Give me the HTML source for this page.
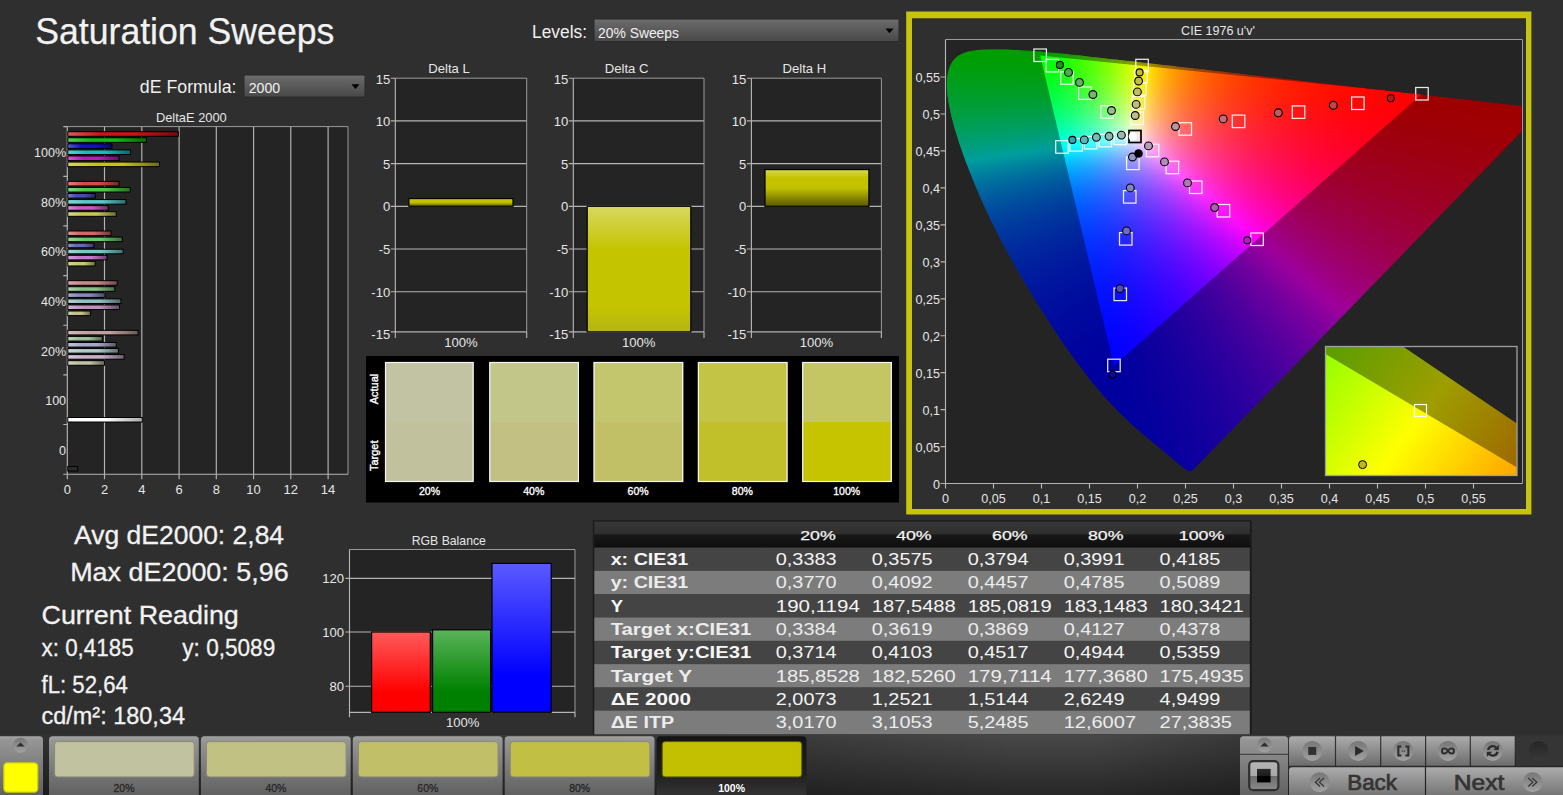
<!DOCTYPE html>
<html><head><meta charset="utf-8"><title>Saturation Sweeps</title>
<style>
html,body{margin:0;padding:0;background:#2f2f2f;}
body{width:1563px;height:795px;overflow:hidden;position:relative;font-family:"Liberation Sans", sans-serif;}
svg{position:absolute;left:0;top:0;}
svg text{font-family:"Liberation Sans", sans-serif;}
#cie{position:absolute;left:945.5px;top:48px;width:577.0px;height:435.5px;clip-path:path('M246.6,422.8 L246.5,422.8 L246.4,422.8 L246.4,422.8 L246.3,422.9 L246.1,422.9 L246.0,422.9 L245.8,422.9 L245.7,423.0 L245.6,423.1 L245.5,423.2 L245.4,423.3 L245.2,423.3 L244.9,423.3 L244.6,423.2 L244.3,423.2 L244.0,423.2 L243.7,423.2 L243.3,423.1 L242.8,422.9 L242.1,422.5 L241.2,422.0 L240.2,421.3 L239.1,420.5 L237.7,419.5 L236.2,418.3 L234.5,416.9 L232.5,415.3 L230.4,413.5 L228.0,411.5 L225.4,409.2 L222.5,406.8 L219.3,404.2 L215.7,401.2 L211.8,398.0 L207.5,394.4 L202.8,390.5 L197.8,386.4 L192.4,381.7 L186.5,376.5 L180.2,370.6 L173.5,364.1 L166.2,356.6 L158.0,347.5 L148.6,336.4 L138.3,323.4 L127.4,308.9 L116.0,292.7 L104.1,274.7 L91.8,255.3 L79.5,234.9 L67.3,213.8 L55.6,192.4 L44.8,171.1 L35.3,150.5 L27.0,130.8 L19.8,112.3 L13.9,95.5 L9.2,80.5 L5.7,67.4 L3.3,55.8 L1.9,45.9 L1.3,37.4 L1.6,30.1 L2.7,23.7 L4.4,18.3 L6.9,13.8 L10.0,10.1 L13.7,7.3 L17.7,5.2 L22.2,3.7 L26.9,2.7 L32.0,2.1 L37.2,1.7 L42.6,1.5 L48.1,1.4 L53.5,1.4 L59.0,1.5 L64.5,1.7 L70.2,1.9 L76.1,2.2 L82.1,2.6 L88.3,3.1 L94.7,3.6 L101.3,4.2 L108.2,4.8 L115.3,5.6 L122.8,6.3 L130.5,7.1 L138.6,8.0 L147.0,8.9 L155.7,9.9 L164.8,10.9 L174.3,12.0 L184.2,13.1 L194.5,14.2 L205.1,15.5 L216.2,16.7 L227.7,18.1 L239.6,19.4 L251.8,20.8 L264.5,22.3 L277.5,23.8 L290.8,25.3 L304.4,26.9 L318.2,28.5 L332.3,30.1 L346.4,31.7 L360.3,33.3 L373.9,34.9 L387.4,36.4 L400.8,38.0 L414.0,39.5 L426.7,41.0 L438.8,42.3 L450.4,43.7 L461.4,44.9 L471.8,46.1 L481.7,47.3 L490.8,48.3 L499.4,49.3 L507.4,50.2 L514.8,51.1 L521.7,51.9 L528.2,52.6 L534.2,53.3 L540.0,54.0 L545.4,54.6 L550.5,55.2 L555.3,55.7 L559.7,56.2 L563.8,56.7 L567.5,57.1 L570.9,57.5 L573.8,57.9 L576.5,58.2 L578.9,58.4 L581.1,58.7 L583.1,58.9 L584.8,59.1 L586.4,59.3 L587.6,59.5 L588.7,59.6 L589.7,59.7 L590.6,59.8 L591.5,59.9 L592.3,60.0 L593.0,60.1 L593.7,60.2 L594.4,60.2 L595.1,60.3 L595.8,60.4 L596.5,60.5 L597.0,60.5 L597.4,60.6 L597.7,60.6 L597.9,60.6 L598.1,60.7 L598.3,60.7 L598.4,60.7 L598.4,60.7 L598.4,60.7Z');overflow:hidden;}
#cie b{display:block;filter:blur(.8px);}
#ciew{position:absolute;left:0;top:0;width:1563px;height:795px;filter:blur(.6px);}
#cie i{display:block;height:2px;}
</style></head><body>
<svg width="1563" height="795" viewBox="0 0 1563 795" shape-rendering="auto"><defs><linearGradient id="dd" x1="0" y1="0" x2="0" y2="1"><stop offset="0" stop-color="#6c6c6c"/><stop offset="1" stop-color="#484848"/></linearGradient><linearGradient id="hb0" x1="0" y1="0" x2="1" y2="0"><stop offset="0" stop-color="#db5a5a"/><stop offset=".3" stop-color="#cc1414"/><stop offset=".6" stop-color="#cc1414"/><stop offset="1" stop-color="#700b0b"/></linearGradient><linearGradient id="hb1" x1="0" y1="0" x2="1" y2="0"><stop offset="0" stop-color="#5ace5a"/><stop offset=".3" stop-color="#14ba14"/><stop offset=".6" stop-color="#14ba14"/><stop offset="1" stop-color="#0b660b"/></linearGradient><linearGradient id="hb2" x1="0" y1="0" x2="1" y2="0"><stop offset="0" stop-color="#5959d2"/><stop offset=".3" stop-color="#1212c0"/><stop offset=".6" stop-color="#1212c0"/><stop offset="1" stop-color="#090969"/></linearGradient><linearGradient id="hb3" x1="0" y1="0" x2="1" y2="0"><stop offset="0" stop-color="#5ad0d0"/><stop offset=".3" stop-color="#14bcbc"/><stop offset=".6" stop-color="#14bcbc"/><stop offset="1" stop-color="#0b6767"/></linearGradient><linearGradient id="hb4" x1="0" y1="0" x2="1" y2="0"><stop offset="0" stop-color="#d05dd0"/><stop offset=".3" stop-color="#bc18bc"/><stop offset=".6" stop-color="#bc18bc"/><stop offset="1" stop-color="#670d67"/></linearGradient><linearGradient id="hb5" x1="0" y1="0" x2="1" y2="0"><stop offset="0" stop-color="#d7d560"/><stop offset=".3" stop-color="#c6c41c"/><stop offset=".6" stop-color="#c6c41c"/><stop offset="1" stop-color="#6c6b0f"/></linearGradient><linearGradient id="hb6" x1="0" y1="0" x2="1" y2="0"><stop offset="0" stop-color="#e37e7e"/><stop offset=".3" stop-color="#d84848"/><stop offset=".6" stop-color="#d84848"/><stop offset="1" stop-color="#762727"/></linearGradient><linearGradient id="hb7" x1="0" y1="0" x2="1" y2="0"><stop offset="0" stop-color="#7ed87e"/><stop offset=".3" stop-color="#48c848"/><stop offset=".6" stop-color="#48c848"/><stop offset="1" stop-color="#276e27"/></linearGradient><linearGradient id="hb8" x1="0" y1="0" x2="1" y2="0"><stop offset="0" stop-color="#7e7ecd"/><stop offset=".3" stop-color="#4848b8"/><stop offset=".6" stop-color="#4848b8"/><stop offset="1" stop-color="#272765"/></linearGradient><linearGradient id="hb9" x1="0" y1="0" x2="1" y2="0"><stop offset="0" stop-color="#8ad8d8"/><stop offset=".3" stop-color="#58c8c8"/><stop offset=".6" stop-color="#58c8c8"/><stop offset="1" stop-color="#306e6e"/></linearGradient><linearGradient id="hb10" x1="0" y1="0" x2="1" y2="0"><stop offset="0" stop-color="#d88ad8"/><stop offset=".3" stop-color="#c858c8"/><stop offset=".6" stop-color="#c858c8"/><stop offset="1" stop-color="#6e306e"/></linearGradient><linearGradient id="hb11" x1="0" y1="0" x2="1" y2="0"><stop offset="0" stop-color="#d8d88a"/><stop offset=".3" stop-color="#c8c858"/><stop offset=".6" stop-color="#c8c858"/><stop offset="1" stop-color="#6e6e30"/></linearGradient><linearGradient id="hb12" x1="0" y1="0" x2="1" y2="0"><stop offset="0" stop-color="#de9595"/><stop offset=".3" stop-color="#d06868"/><stop offset=".6" stop-color="#d06868"/><stop offset="1" stop-color="#723939"/></linearGradient><linearGradient id="hb13" x1="0" y1="0" x2="1" y2="0"><stop offset="0" stop-color="#95d895"/><stop offset=".3" stop-color="#68c868"/><stop offset=".6" stop-color="#68c868"/><stop offset="1" stop-color="#396e39"/></linearGradient><linearGradient id="hb14" x1="0" y1="0" x2="1" y2="0"><stop offset="0" stop-color="#9595cd"/><stop offset=".3" stop-color="#6868b8"/><stop offset=".6" stop-color="#6868b8"/><stop offset="1" stop-color="#393965"/></linearGradient><linearGradient id="hb15" x1="0" y1="0" x2="1" y2="0"><stop offset="0" stop-color="#a0d8d8"/><stop offset=".3" stop-color="#78c8c8"/><stop offset=".6" stop-color="#78c8c8"/><stop offset="1" stop-color="#426e6e"/></linearGradient><linearGradient id="hb16" x1="0" y1="0" x2="1" y2="0"><stop offset="0" stop-color="#d8a0d8"/><stop offset=".3" stop-color="#c878c8"/><stop offset=".6" stop-color="#c878c8"/><stop offset="1" stop-color="#6e426e"/></linearGradient><linearGradient id="hb17" x1="0" y1="0" x2="1" y2="0"><stop offset="0" stop-color="#d8d89a"/><stop offset=".3" stop-color="#c8c870"/><stop offset=".6" stop-color="#c8c870"/><stop offset="1" stop-color="#6e6e3d"/></linearGradient><linearGradient id="hb18" x1="0" y1="0" x2="1" y2="0"><stop offset="0" stop-color="#d8abab"/><stop offset=".3" stop-color="#c88888"/><stop offset=".6" stop-color="#c88888"/><stop offset="1" stop-color="#6e4a4a"/></linearGradient><linearGradient id="hb19" x1="0" y1="0" x2="1" y2="0"><stop offset="0" stop-color="#abd2ab"/><stop offset=".3" stop-color="#88c088"/><stop offset=".6" stop-color="#88c088"/><stop offset="1" stop-color="#4a694a"/></linearGradient><linearGradient id="hb20" x1="0" y1="0" x2="1" y2="0"><stop offset="0" stop-color="#ababd2"/><stop offset=".3" stop-color="#8888c0"/><stop offset=".6" stop-color="#8888c0"/><stop offset="1" stop-color="#4a4a69"/></linearGradient><linearGradient id="hb21" x1="0" y1="0" x2="1" y2="0"><stop offset="0" stop-color="#b1d2d2"/><stop offset=".3" stop-color="#90c0c0"/><stop offset=".6" stop-color="#90c0c0"/><stop offset="1" stop-color="#4f6969"/></linearGradient><linearGradient id="hb22" x1="0" y1="0" x2="1" y2="0"><stop offset="0" stop-color="#d2b1d2"/><stop offset=".3" stop-color="#c090c0"/><stop offset=".6" stop-color="#c090c0"/><stop offset="1" stop-color="#694f69"/></linearGradient><linearGradient id="hb23" x1="0" y1="0" x2="1" y2="0"><stop offset="0" stop-color="#d2d2ab"/><stop offset=".3" stop-color="#c0c088"/><stop offset=".6" stop-color="#c0c088"/><stop offset="1" stop-color="#69694a"/></linearGradient><linearGradient id="hb24" x1="0" y1="0" x2="1" y2="0"><stop offset="0" stop-color="#d2bcbc"/><stop offset=".3" stop-color="#c0a0a0"/><stop offset=".6" stop-color="#c0a0a0"/><stop offset="1" stop-color="#695858"/></linearGradient><linearGradient id="hb25" x1="0" y1="0" x2="1" y2="0"><stop offset="0" stop-color="#bcd2bc"/><stop offset=".3" stop-color="#a0c0a0"/><stop offset=".6" stop-color="#a0c0a0"/><stop offset="1" stop-color="#586958"/></linearGradient><linearGradient id="hb26" x1="0" y1="0" x2="1" y2="0"><stop offset="0" stop-color="#c2c2d8"/><stop offset=".3" stop-color="#a8a8c8"/><stop offset=".6" stop-color="#a8a8c8"/><stop offset="1" stop-color="#5c5c6e"/></linearGradient><linearGradient id="hb27" x1="0" y1="0" x2="1" y2="0"><stop offset="0" stop-color="#c7d8d8"/><stop offset=".3" stop-color="#b0c8c8"/><stop offset=".6" stop-color="#b0c8c8"/><stop offset="1" stop-color="#606e6e"/></linearGradient><linearGradient id="hb28" x1="0" y1="0" x2="1" y2="0"><stop offset="0" stop-color="#d8c7d8"/><stop offset=".3" stop-color="#c8b0c8"/><stop offset=".6" stop-color="#c8b0c8"/><stop offset="1" stop-color="#6e606e"/></linearGradient><linearGradient id="hb29" x1="0" y1="0" x2="1" y2="0"><stop offset="0" stop-color="#d2d2c2"/><stop offset=".3" stop-color="#c0c0a8"/><stop offset=".6" stop-color="#c0c0a8"/><stop offset="1" stop-color="#69695c"/></linearGradient><linearGradient id="wb" x1="0" y1="0" x2="1" y2="0"><stop offset="0" stop-color="#fff"/><stop offset=".5" stop-color="#fff"/><stop offset="1" stop-color="#aaa"/></linearGradient><linearGradient id="yb1" x1="0" y1="0" x2="0" y2="1"><stop offset="0" stop-color="#d8d860"/><stop offset=".35" stop-color="#c4c400"/><stop offset=".8" stop-color="#c4c400"/><stop offset="1" stop-color="#b4b418"/></linearGradient><linearGradient id="yb2" x1="0" y1="0" x2="0" y2="1"><stop offset="0" stop-color="#d8d848"/><stop offset=".22" stop-color="#c6c400"/><stop offset=".5" stop-color="#c4c200"/><stop offset="1" stop-color="#585800"/></linearGradient><linearGradient id="gr" x1="0" y1="0" x2="0" y2="1"><stop offset="0" stop-color="#ff5a5a"/><stop offset=".75" stop-color="#ff0000"/></linearGradient><linearGradient id="gg" x1="0" y1="0" x2="0" y2="1"><stop offset="0" stop-color="#5ab45a"/><stop offset=".75" stop-color="#008000"/></linearGradient><linearGradient id="gb" x1="0" y1="0" x2="0" y2="1"><stop offset="0" stop-color="#5a5aff"/><stop offset=".75" stop-color="#0000ff"/></linearGradient><linearGradient id="th" x1="0" y1="0" x2="0" y2="1"><stop offset="0" stop-color="#383838"/><stop offset=".48" stop-color="#2e2e2e"/><stop offset=".5" stop-color="#181818"/><stop offset="1" stop-color="#0e0e0e"/></linearGradient><linearGradient id="bar" x1="0" y1="0" x2="0" y2="1"><stop offset="0" stop-color="#484848"/><stop offset="1" stop-color="#272727"/></linearGradient><linearGradient id="tab" x1="0" y1="0" x2="0" y2="1"><stop offset="0" stop-color="#a4a4a4"/><stop offset="0.06" stop-color="#969696"/><stop offset="1" stop-color="#606060"/></linearGradient><linearGradient id="tabs" x1="0" y1="0" x2="0" y2="1"><stop offset="0" stop-color="#141414"/><stop offset="0.6" stop-color="#1e1e1e"/><stop offset="1" stop-color="#343434"/></linearGradient><linearGradient id="btn" x1="0" y1="0" x2="0" y2="1"><stop offset="0" stop-color="#acacac"/><stop offset="1" stop-color="#6c6c6c"/></linearGradient><linearGradient id="btn2" x1="0" y1="0" x2="0" y2="1"><stop offset="0" stop-color="#acacac"/><stop offset="1" stop-color="#747474"/></linearGradient><linearGradient id="ic" x1="0" y1="0" x2="0" y2="1"><stop offset="0" stop-color="#767676"/><stop offset="1" stop-color="#a2a2a2"/></linearGradient><linearGradient id="gloss" x1="0" y1="0" x2="0" y2="1"><stop offset="0" stop-color="#b6b6b6"/><stop offset="0.5" stop-color="#a8a8a8"/><stop offset="0.5" stop-color="#6c6c6c"/><stop offset="1" stop-color="#8a8a8a"/></linearGradient><linearGradient id="barh" x1="0" y1="0" x2="1" y2="0"><stop offset="0" stop-color="#000" stop-opacity=".3"/><stop offset=".5" stop-color="#000" stop-opacity=".18"/><stop offset=".65" stop-color="#000" stop-opacity="0"/><stop offset=".7" stop-color="#000" stop-opacity="0"/><stop offset=".8" stop-color="#000" stop-opacity=".22"/><stop offset="1" stop-color="#000" stop-opacity=".3"/></linearGradient><linearGradient id="blk" x1="0" y1="0" x2="0" y2="1"><stop offset="0" stop-color="#2a2a2a"/><stop offset="0.5" stop-color="#1c1c1c"/><stop offset="0.5" stop-color="#000"/><stop offset="1" stop-color="#000"/></linearGradient><linearGradient id="dis" x1="0" y1="0" x2="0" y2="1"><stop offset="0" stop-color="#262626"/><stop offset="1" stop-color="#383838"/></linearGradient></defs>
<text x="35.2" y="43.7" font-size="36.67" fill="#f2f2f2" textLength="299.2" lengthAdjust="spacingAndGlyphs" stroke="#f2f2f2" stroke-width=".25">Saturation Sweeps</text>
<text x="139.8" y="93" font-size="18.70" fill="#f0f0f0" textLength="96.7" lengthAdjust="spacingAndGlyphs">dE Formula:</text>
<rect x="244" y="75" width="121" height="22" fill="url(#dd)" stroke="#2a2a2a" stroke-width="1" rx="1.5"/><text x="248.7" y="93" font-size="14.90" fill="#f0f0f0" textLength="31.4" lengthAdjust="spacingAndGlyphs">2000</text><path d="M351.5,84.2h8l-4,4.8z" fill="#000"/>
<text x="532" y="38" font-size="18.70" fill="#f0f0f0" textLength="55" lengthAdjust="spacingAndGlyphs">Levels:</text>
<rect x="594" y="19" width="305" height="22.5" fill="url(#dd)" stroke="#2a2a2a" stroke-width="1" rx="1.5"/><text x="598" y="38" font-size="14.90" fill="#f0f0f0" textLength="81" lengthAdjust="spacingAndGlyphs">20% Sweeps</text><path d="M885.5,28.45h8l-4,4.8z" fill="#000"/>
<text x="155.9" y="122" font-size="12.75" fill="#e6e6e6" textLength="70.9" lengthAdjust="spacingAndGlyphs">DeltaE 2000</text>
<rect x="67.3" y="126.6" width="280.7" height="347.6" fill="#242424"/>
<path d="M104.5,126.6V474.2M141.8,126.6V474.2M179.1,126.6V474.2M216.3,126.6V474.2M253.6,126.6V474.2M290.8,126.6V474.2M328.1,126.6V474.2" stroke="#b4b4b4" stroke-width="1.15" fill="none"/>
<path d="M67.3,126.6H348V474.2" stroke="#9a9a9a" stroke-width="1" fill="none"/>
<path d="M67.3,126.6V474.2H348" stroke="#b4b4b4" stroke-width="1.15" fill="none"/>
<path d="M63.3,126.6h4M63.3,176.3h4M63.3,225.9h4M63.3,275.6h4M63.3,325.2h4M63.3,374.9h4M63.3,424.5h4M63.3,474.2h4M67.3,474.2v5M104.5,474.2v5M141.8,474.2v5M179.1,474.2v5M216.3,474.2v5M253.6,474.2v5M290.8,474.2v5M328.1,474.2v5" stroke="#b4b4b4" stroke-width="1.15" fill="none"/>
<text x="33.9691" y="156.929" font-size="13.44" fill="#e6e6e6" textLength="32.1309" lengthAdjust="spacingAndGlyphs">100%</text>
<text x="40.9555" y="206.586" font-size="13.44" fill="#e6e6e6" textLength="25.1445" lengthAdjust="spacingAndGlyphs">80%</text>
<text x="40.9555" y="256.243" font-size="13.44" fill="#e6e6e6" textLength="25.1445" lengthAdjust="spacingAndGlyphs">60%</text>
<text x="40.9555" y="305.9" font-size="13.44" fill="#e6e6e6" textLength="25.1445" lengthAdjust="spacingAndGlyphs">40%</text>
<text x="40.9555" y="355.557" font-size="13.44" fill="#e6e6e6" textLength="25.1445" lengthAdjust="spacingAndGlyphs">20%</text>
<text x="45.1407" y="405.214" font-size="13.44" fill="#e6e6e6" textLength="20.9593" lengthAdjust="spacingAndGlyphs">100</text>
<text x="59.1136" y="454.871" font-size="13.44" fill="#e6e6e6" textLength="6.98643" lengthAdjust="spacingAndGlyphs">0</text>
<text x="63.6987" y="494" font-size="13.44" fill="#e6e6e6" textLength="7.2025" lengthAdjust="spacingAndGlyphs">0</text>
<text x="100.949" y="494" font-size="13.44" fill="#e6e6e6" textLength="7.2025" lengthAdjust="spacingAndGlyphs">2</text>
<text x="138.199" y="494" font-size="13.44" fill="#e6e6e6" textLength="7.2025" lengthAdjust="spacingAndGlyphs">4</text>
<text x="175.449" y="494" font-size="13.44" fill="#e6e6e6" textLength="7.2025" lengthAdjust="spacingAndGlyphs">6</text>
<text x="212.699" y="494" font-size="13.44" fill="#e6e6e6" textLength="7.2025" lengthAdjust="spacingAndGlyphs">8</text>
<text x="246.347" y="494" font-size="13.44" fill="#e6e6e6" textLength="14.405" lengthAdjust="spacingAndGlyphs">10</text>
<text x="283.597" y="494" font-size="13.44" fill="#e6e6e6" textLength="14.405" lengthAdjust="spacingAndGlyphs">12</text>
<text x="320.847" y="494" font-size="13.44" fill="#e6e6e6" textLength="14.405" lengthAdjust="spacingAndGlyphs">14</text>
<rect x="67.8" y="131.7" width="110.505" height="4.6" fill="url(#hb0)" stroke="#000" stroke-width="1"/>
<rect x="67.8" y="137.77" width="78.6562" height="4.6" fill="url(#hb1)" stroke="#000" stroke-width="1"/>
<rect x="67.8" y="143.84" width="44.2" height="4.6" fill="url(#hb2)" stroke="#000" stroke-width="1"/>
<rect x="67.8" y="149.91" width="62.825" height="4.6" fill="url(#hb3)" stroke="#000" stroke-width="1"/>
<rect x="67.8" y="155.98" width="51.2775" height="4.6" fill="url(#hb4)" stroke="#000" stroke-width="1"/>
<rect x="67.8" y="162.05" width="91.6938" height="4.6" fill="url(#hb5)" stroke="#000" stroke-width="1"/>
<rect x="67.8" y="181.357" width="51.2775" height="4.6" fill="url(#hb6)" stroke="#000" stroke-width="1"/>
<rect x="67.8" y="187.427" width="62.4525" height="4.6" fill="url(#hb7)" stroke="#000" stroke-width="1"/>
<rect x="67.8" y="193.497" width="27.4375" height="4.6" fill="url(#hb8)" stroke="#000" stroke-width="1"/>
<rect x="67.8" y="199.567" width="58.1687" height="4.6" fill="url(#hb9)" stroke="#000" stroke-width="1"/>
<rect x="67.8" y="205.637" width="40.475" height="4.6" fill="url(#hb10)" stroke="#000" stroke-width="1"/>
<rect x="67.8" y="211.707" width="48.4838" height="4.6" fill="url(#hb11)" stroke="#000" stroke-width="1"/>
<rect x="67.8" y="231.014" width="43.2688" height="4.6" fill="url(#hb12)" stroke="#000" stroke-width="1"/>
<rect x="67.8" y="237.084" width="54.4438" height="4.6" fill="url(#hb13)" stroke="#000" stroke-width="1"/>
<rect x="67.8" y="243.154" width="26.1337" height="4.6" fill="url(#hb14)" stroke="#000" stroke-width="1"/>
<rect x="67.8" y="249.224" width="55.375" height="4.6" fill="url(#hb15)" stroke="#000" stroke-width="1"/>
<rect x="67.8" y="255.294" width="39.1713" height="4.6" fill="url(#hb16)" stroke="#000" stroke-width="1"/>
<rect x="67.8" y="261.364" width="27.4375" height="4.6" fill="url(#hb17)" stroke="#000" stroke-width="1"/>
<rect x="67.8" y="280.671" width="49.415" height="4.6" fill="url(#hb18)" stroke="#000" stroke-width="1"/>
<rect x="67.8" y="286.741" width="46.9937" height="4.6" fill="url(#hb19)" stroke="#000" stroke-width="1"/>
<rect x="67.8" y="292.811" width="37.3087" height="4.6" fill="url(#hb20)" stroke="#000" stroke-width="1"/>
<rect x="67.8" y="298.881" width="53.14" height="4.6" fill="url(#hb21)" stroke="#000" stroke-width="1"/>
<rect x="67.8" y="304.951" width="51.65" height="4.6" fill="url(#hb22)" stroke="#000" stroke-width="1"/>
<rect x="67.8" y="311.021" width="22.7812" height="4.6" fill="url(#hb23)" stroke="#000" stroke-width="1"/>
<rect x="67.8" y="330.329" width="70.275" height="4.6" fill="url(#hb24)" stroke="#000" stroke-width="1"/>
<rect x="67.8" y="336.399" width="34.515" height="4.6" fill="url(#hb25)" stroke="#000" stroke-width="1"/>
<rect x="67.8" y="342.469" width="48.4838" height="4.6" fill="url(#hb26)" stroke="#000" stroke-width="1"/>
<rect x="67.8" y="348.539" width="50.7188" height="4.6" fill="url(#hb27)" stroke="#000" stroke-width="1"/>
<rect x="67.8" y="354.609" width="56.3062" height="4.6" fill="url(#hb28)" stroke="#000" stroke-width="1"/>
<rect x="67.8" y="360.679" width="36.75" height="4.6" fill="url(#hb29)" stroke="#000" stroke-width="1"/>
<rect x="67.8" y="417.5" width="74.5" height="4.5" fill="url(#wb)" stroke="#000" stroke-width="1"/>
<rect x="67.8" y="466.5" width="10" height="4.5" fill="#2a2a2a" stroke="#000" stroke-width="1"/>
<rect x="395.3" y="78.2" width="131.4" height="253.7" fill="#242424"/>
<path d="M395.3,120.9H526.7M395.3,163.6H526.7M395.3,206.3H526.7M395.3,249.0H526.7M395.3,291.7H526.7" stroke="#b4b4b4" stroke-width="1.15" fill="none"/>
<path d="M395.3,78.2H526.7V331.9" stroke="#9a9a9a" fill="none"/>
<path d="M395.3,78.2V331.9H526.7M395.3,331.9v6M526.7,331.9v6M390.8,78.2h4.5M390.8,120.9h4.5M390.8,163.6h4.5M390.8,206.3h4.5M390.8,249.0h4.5M390.8,291.7h4.5M390.8,331.9h4.5" stroke="#b4b4b4" stroke-width="1.15" fill="none"/>
<text x="375.735" y="83.9" font-size="13.07" fill="#e6e6e6" textLength="14.5651" lengthAdjust="spacingAndGlyphs">15</text>
<text x="375.735" y="125.8" font-size="13.07" fill="#e6e6e6" textLength="14.5651" lengthAdjust="spacingAndGlyphs">10</text>
<text x="383.017" y="168.5" font-size="13.07" fill="#e6e6e6" textLength="7.28253" lengthAdjust="spacingAndGlyphs">5</text>
<text x="383.017" y="211.2" font-size="13.07" fill="#e6e6e6" textLength="7.28253" lengthAdjust="spacingAndGlyphs">0</text>
<text x="378.657" y="253.9" font-size="13.07" fill="#e6e6e6" textLength="11.643" lengthAdjust="spacingAndGlyphs">-5</text>
<text x="371.374" y="296.6" font-size="13.07" fill="#e6e6e6" textLength="18.9256" lengthAdjust="spacingAndGlyphs">-10</text>
<text x="371.374" y="339.3" font-size="13.07" fill="#e6e6e6" textLength="18.9256" lengthAdjust="spacingAndGlyphs">-15</text>
<text x="444.254" y="346.6" font-size="13.07" fill="#e6e6e6" textLength="33.4927" lengthAdjust="spacingAndGlyphs">100%</text>
<text x="428.254" y="73.1" font-size="13.07" fill="#e6e6e6" textLength="41.4914" lengthAdjust="spacingAndGlyphs">Delta L</text>
<rect x="408.9" y="198.614" width="104.1" height="7.686" fill="url(#yb2)" stroke="#000" stroke-width="1.2"/>
<rect x="573.3" y="78.2" width="130.7" height="253.7" fill="#242424"/>
<path d="M573.3,120.9H704M573.3,163.6H704M573.3,206.3H704M573.3,249.0H704M573.3,291.7H704" stroke="#b4b4b4" stroke-width="1.15" fill="none"/>
<path d="M573.3,78.2H704V331.9" stroke="#9a9a9a" fill="none"/>
<path d="M573.3,78.2V331.9H704M573.3,331.9v6M704,331.9v6M568.8,78.2h4.5M568.8,120.9h4.5M568.8,163.6h4.5M568.8,206.3h4.5M568.8,249.0h4.5M568.8,291.7h4.5M568.8,331.9h4.5" stroke="#b4b4b4" stroke-width="1.15" fill="none"/>
<text x="553.735" y="83.9" font-size="13.07" fill="#e6e6e6" textLength="14.5651" lengthAdjust="spacingAndGlyphs">15</text>
<text x="553.735" y="125.8" font-size="13.07" fill="#e6e6e6" textLength="14.5651" lengthAdjust="spacingAndGlyphs">10</text>
<text x="561.017" y="168.5" font-size="13.07" fill="#e6e6e6" textLength="7.28253" lengthAdjust="spacingAndGlyphs">5</text>
<text x="561.017" y="211.2" font-size="13.07" fill="#e6e6e6" textLength="7.28253" lengthAdjust="spacingAndGlyphs">0</text>
<text x="556.657" y="253.9" font-size="13.07" fill="#e6e6e6" textLength="11.643" lengthAdjust="spacingAndGlyphs">-5</text>
<text x="549.374" y="296.6" font-size="13.07" fill="#e6e6e6" textLength="18.9256" lengthAdjust="spacingAndGlyphs">-10</text>
<text x="549.374" y="339.3" font-size="13.07" fill="#e6e6e6" textLength="18.9256" lengthAdjust="spacingAndGlyphs">-15</text>
<text x="621.904" y="346.6" font-size="13.07" fill="#e6e6e6" textLength="33.4927" lengthAdjust="spacingAndGlyphs">100%</text>
<text x="604.817" y="73.1" font-size="13.07" fill="#e6e6e6" textLength="43.6665" lengthAdjust="spacingAndGlyphs">Delta C</text>
<rect x="587.2" y="206.3" width="103.6" height="125.6" fill="url(#yb1)" stroke="#000" stroke-width="1.2"/>
<rect x="751.4" y="78.2" width="130" height="253.7" fill="#242424"/>
<path d="M751.4,120.9H881.4M751.4,163.6H881.4M751.4,206.3H881.4M751.4,249.0H881.4M751.4,291.7H881.4" stroke="#b4b4b4" stroke-width="1.15" fill="none"/>
<path d="M751.4,78.2H881.4V331.9" stroke="#9a9a9a" fill="none"/>
<path d="M751.4,78.2V331.9H881.4M751.4,331.9v6M881.4,331.9v6M746.9,78.2h4.5M746.9,120.9h4.5M746.9,163.6h4.5M746.9,206.3h4.5M746.9,249.0h4.5M746.9,291.7h4.5M746.9,331.9h4.5" stroke="#b4b4b4" stroke-width="1.15" fill="none"/>
<text x="731.835" y="83.9" font-size="13.07" fill="#e6e6e6" textLength="14.5651" lengthAdjust="spacingAndGlyphs">15</text>
<text x="731.835" y="125.8" font-size="13.07" fill="#e6e6e6" textLength="14.5651" lengthAdjust="spacingAndGlyphs">10</text>
<text x="739.117" y="168.5" font-size="13.07" fill="#e6e6e6" textLength="7.28253" lengthAdjust="spacingAndGlyphs">5</text>
<text x="739.117" y="211.2" font-size="13.07" fill="#e6e6e6" textLength="7.28253" lengthAdjust="spacingAndGlyphs">0</text>
<text x="734.757" y="253.9" font-size="13.07" fill="#e6e6e6" textLength="11.643" lengthAdjust="spacingAndGlyphs">-5</text>
<text x="727.474" y="296.6" font-size="13.07" fill="#e6e6e6" textLength="18.9256" lengthAdjust="spacingAndGlyphs">-10</text>
<text x="727.474" y="339.3" font-size="13.07" fill="#e6e6e6" textLength="18.9256" lengthAdjust="spacingAndGlyphs">-15</text>
<text x="799.654" y="346.6" font-size="13.07" fill="#e6e6e6" textLength="33.4927" lengthAdjust="spacingAndGlyphs">100%</text>
<text x="782.567" y="73.1" font-size="13.07" fill="#e6e6e6" textLength="43.6665" lengthAdjust="spacingAndGlyphs">Delta H</text>
<rect x="765" y="169.578" width="103.9" height="36.722" fill="url(#yb2)" stroke="#000" stroke-width="1.2"/>
<rect x="366" y="356" width="533" height="146.5" fill="#000"/>
<rect x="385" y="362" width="88.6" height="60" fill="#c2c3a2"/>
<rect x="385" y="422" width="88.6" height="59.5" fill="#c1c19e"/>
<rect x="385.5" y="362.5" width="87.6" height="119" fill="none" stroke="#f4f4f4" stroke-width="1.2"/>
<text x="418.958" y="495" font-size="11.39" fill="#fff" textLength="21.0833" lengthAdjust="spacingAndGlyphs" stroke="#fff" stroke-width=".35">20%</text>
<rect x="489.3" y="362" width="89.6" height="60" fill="#c2c688"/>
<rect x="489.3" y="422" width="89.6" height="59.5" fill="#c2c183"/>
<rect x="489.8" y="362.5" width="88.6" height="119" fill="none" stroke="#f4f4f4" stroke-width="1.2"/>
<text x="523.258" y="495" font-size="11.39" fill="#fff" textLength="21.0833" lengthAdjust="spacingAndGlyphs" stroke="#fff" stroke-width=".35">40%</text>
<rect x="593.6" y="362" width="89.6" height="60" fill="#c3c66c"/>
<rect x="593.6" y="422" width="89.6" height="59.5" fill="#c1c067"/>
<rect x="594.1" y="362.5" width="88.6" height="119" fill="none" stroke="#f4f4f4" stroke-width="1.2"/>
<text x="627.558" y="495" font-size="11.39" fill="#fff" textLength="21.0833" lengthAdjust="spacingAndGlyphs" stroke="#fff" stroke-width=".35">60%</text>
<rect x="697.9" y="362" width="89.6" height="60" fill="#c3c445"/>
<rect x="697.9" y="422" width="89.6" height="59.5" fill="#c1c02a"/>
<rect x="698.4" y="362.5" width="88.6" height="119" fill="none" stroke="#f4f4f4" stroke-width="1.2"/>
<text x="731.858" y="495" font-size="11.39" fill="#fff" textLength="21.0833" lengthAdjust="spacingAndGlyphs" stroke="#fff" stroke-width=".35">80%</text>
<rect x="802.2" y="362" width="89.6" height="60" fill="#c4c664"/>
<rect x="802.2" y="422" width="89.6" height="59.5" fill="#c6c400"/>
<rect x="802.7" y="362.5" width="88.6" height="119" fill="none" stroke="#f4f4f4" stroke-width="1.2"/>
<text x="833.229" y="495" font-size="11.39" fill="#fff" textLength="26.9414" lengthAdjust="spacingAndGlyphs" stroke="#fff" stroke-width=".35">100%</text>
<text x="0" y="0" font-size="11.39" fill="#fff" textLength="30.4969" lengthAdjust="spacingAndGlyphs" stroke="#fff" stroke-width=".35" transform="translate(377.6,404.3) rotate(-90)">Actual</text>
<text x="0" y="0" font-size="11.39" fill="#fff" textLength="30.4952" lengthAdjust="spacingAndGlyphs" stroke="#fff" stroke-width=".35" transform="translate(377.6,471) rotate(-90)">Target</text>
<text x="74.1" y="543.8" font-size="26.67" fill="#f2f2f2" textLength="210" lengthAdjust="spacingAndGlyphs" stroke="#f2f2f2" stroke-width=".3">Avg dE2000: 2,84</text>
<text x="70.2" y="581" font-size="26.67" fill="#f2f2f2" textLength="218.5" lengthAdjust="spacingAndGlyphs" stroke="#f2f2f2" stroke-width=".3">Max dE2000: 5,96</text>
<text x="41.5" y="624" font-size="26.67" fill="#f2f2f2" textLength="197.3" lengthAdjust="spacingAndGlyphs" stroke="#f2f2f2" stroke-width=".3">Current Reading</text>
<text x="41.5" y="656.4" font-size="23.33" fill="#f2f2f2" textLength="92.1" lengthAdjust="spacingAndGlyphs" stroke="#f2f2f2" stroke-width=".3">x: 0,4185</text>
<text x="182.3" y="656.4" font-size="23.33" fill="#f2f2f2" textLength="92.9" lengthAdjust="spacingAndGlyphs" stroke="#f2f2f2" stroke-width=".3">y: 0,5089</text>
<text x="41.5" y="692.5" font-size="23.33" fill="#f2f2f2" textLength="86.3" lengthAdjust="spacingAndGlyphs" stroke="#f2f2f2" stroke-width=".3">fL: 52,64</text>
<text x="41.5" y="723.8" font-size="23.33" fill="#f2f2f2" textLength="143.5" lengthAdjust="spacingAndGlyphs" stroke="#f2f2f2" stroke-width=".3">cd/m²: 180,34</text>
<text x="411.7" y="544.8" font-size="13.33" fill="#e6e6e6" textLength="74.2" lengthAdjust="spacingAndGlyphs">RGB Balance</text>
<rect x="349.5" y="549.5" width="225.5" height="162.8" fill="#242424"/>
<path d="M349.5,578.3H575M349.5,632H575M349.5,686.2H575" stroke="#b4b4b4" stroke-width="1.15" fill="none"/>
<path d="M349.5,549.5H575V712.3" stroke="#9a9a9a" fill="none"/>
<path d="M349.5,549.5V712.3H575M349.5,712.3v5M575,712.3v5M345.5,578.3h4M345.5,632h4M345.5,686.2h4" stroke="#b4b4b4" stroke-width="1.15" fill="none"/>
<text x="322.152" y="583.1" font-size="13.07" fill="#e6e6e6" textLength="21.8476" lengthAdjust="spacingAndGlyphs">120</text>
<text x="322.152" y="636.8" font-size="13.07" fill="#e6e6e6" textLength="21.8476" lengthAdjust="spacingAndGlyphs">100</text>
<text x="329.435" y="691" font-size="13.07" fill="#e6e6e6" textLength="14.5651" lengthAdjust="spacingAndGlyphs">80</text>
<text x="445.954" y="727.1" font-size="13.07" fill="#e6e6e6" textLength="33.4927" lengthAdjust="spacingAndGlyphs">100%</text>
<rect x="371.6" y="632" width="58.7" height="80.3" fill="url(#gr)" stroke="#000" stroke-width="1.2"/>
<rect x="432.6" y="629.8" width="58" height="82.5" fill="url(#gg)" stroke="#000" stroke-width="1.2"/>
<rect x="492" y="563.4" width="59.2" height="148.9" fill="url(#gb)" stroke="#000" stroke-width="1.2"/>
<rect x="592.8" y="520.2" width="659" height="214" fill="#1c1c1c"/>
<rect x="594.3" y="521.7" width="655.5" height="26" fill="url(#th)"/>
<text x="800.25" y="540" font-size="13.60" fill="#f4f4f4" textLength="35.5" lengthAdjust="spacingAndGlyphs" stroke="#f4f4f4" stroke-width=".25">20%</text>
<text x="896.15" y="540" font-size="13.60" fill="#f4f4f4" textLength="35.5" lengthAdjust="spacingAndGlyphs" stroke="#f4f4f4" stroke-width=".25">40%</text>
<text x="992.05" y="540" font-size="13.60" fill="#f4f4f4" textLength="35.5" lengthAdjust="spacingAndGlyphs" stroke="#f4f4f4" stroke-width=".25">60%</text>
<text x="1087.95" y="540" font-size="13.60" fill="#f4f4f4" textLength="35.5" lengthAdjust="spacingAndGlyphs" stroke="#f4f4f4" stroke-width=".25">80%</text>
<text x="1178.75" y="540" font-size="13.60" fill="#f4f4f4" textLength="45.7" lengthAdjust="spacingAndGlyphs" stroke="#f4f4f4" stroke-width=".25">100%</text>
<rect x="594.3" y="547.6" width="655.5" height="23.6" fill="#444"/>
<text x="610.7" y="565.1" font-size="16.00" fill="#f6f6f6" font-weight="bold" textLength="77.6" lengthAdjust="spacingAndGlyphs">x: CIE31</text>
<text x="775.8" y="565.1" font-size="16.00" fill="#f4f4f4" textLength="60.8" lengthAdjust="spacingAndGlyphs">0,3383</text>
<text x="871.75" y="565.1" font-size="16.00" fill="#f4f4f4" textLength="60.8" lengthAdjust="spacingAndGlyphs">0,3575</text>
<text x="967.7" y="565.1" font-size="16.00" fill="#f4f4f4" textLength="60.8" lengthAdjust="spacingAndGlyphs">0,3794</text>
<text x="1063.65" y="565.1" font-size="16.00" fill="#f4f4f4" textLength="60.8" lengthAdjust="spacingAndGlyphs">0,3991</text>
<text x="1159.6" y="565.1" font-size="16.00" fill="#f4f4f4" textLength="60.8" lengthAdjust="spacingAndGlyphs">0,4185</text>
<rect x="594.3" y="570.9" width="655.5" height="23.6" fill="#7c7c7c"/>
<text x="610.7" y="588.4" font-size="16.00" fill="#ececec" font-weight="bold" textLength="77.6" lengthAdjust="spacingAndGlyphs">y: CIE31</text>
<text x="775.8" y="588.4" font-size="16.00" fill="#ececec" textLength="60.8" lengthAdjust="spacingAndGlyphs">0,3770</text>
<text x="871.75" y="588.4" font-size="16.00" fill="#ececec" textLength="60.8" lengthAdjust="spacingAndGlyphs">0,4092</text>
<text x="967.7" y="588.4" font-size="16.00" fill="#ececec" textLength="60.8" lengthAdjust="spacingAndGlyphs">0,4457</text>
<text x="1063.65" y="588.4" font-size="16.00" fill="#ececec" textLength="60.8" lengthAdjust="spacingAndGlyphs">0,4785</text>
<text x="1159.6" y="588.4" font-size="16.00" fill="#ececec" textLength="60.8" lengthAdjust="spacingAndGlyphs">0,5089</text>
<rect x="594.3" y="594.2" width="655.5" height="23.6" fill="#444"/>
<text x="610.7" y="611.7" font-size="16.00" fill="#f6f6f6" font-weight="bold" textLength="12.3" lengthAdjust="spacingAndGlyphs">Y</text>
<text x="775.8" y="611.7" font-size="16.00" fill="#f4f4f4" textLength="84" lengthAdjust="spacingAndGlyphs">190,1194</text>
<text x="871.75" y="611.7" font-size="16.00" fill="#f4f4f4" textLength="84" lengthAdjust="spacingAndGlyphs">187,5488</text>
<text x="967.7" y="611.7" font-size="16.00" fill="#f4f4f4" textLength="84" lengthAdjust="spacingAndGlyphs">185,0819</text>
<text x="1063.65" y="611.7" font-size="16.00" fill="#f4f4f4" textLength="84" lengthAdjust="spacingAndGlyphs">183,1483</text>
<text x="1159.6" y="611.7" font-size="16.00" fill="#f4f4f4" textLength="84" lengthAdjust="spacingAndGlyphs">180,3421</text>
<rect x="594.3" y="617.5" width="655.5" height="23.6" fill="#7c7c7c"/>
<text x="610.7" y="635" font-size="16.00" fill="#ececec" font-weight="bold" textLength="140.6" lengthAdjust="spacingAndGlyphs">Target x:CIE31</text>
<text x="775.8" y="635" font-size="16.00" fill="#ececec" textLength="60.8" lengthAdjust="spacingAndGlyphs">0,3384</text>
<text x="871.75" y="635" font-size="16.00" fill="#ececec" textLength="60.8" lengthAdjust="spacingAndGlyphs">0,3619</text>
<text x="967.7" y="635" font-size="16.00" fill="#ececec" textLength="60.8" lengthAdjust="spacingAndGlyphs">0,3869</text>
<text x="1063.65" y="635" font-size="16.00" fill="#ececec" textLength="60.8" lengthAdjust="spacingAndGlyphs">0,4127</text>
<text x="1159.6" y="635" font-size="16.00" fill="#ececec" textLength="60.8" lengthAdjust="spacingAndGlyphs">0,4378</text>
<rect x="594.3" y="640.8" width="655.5" height="23.6" fill="#444"/>
<text x="610.7" y="658.3" font-size="16.00" fill="#f6f6f6" font-weight="bold" textLength="140.6" lengthAdjust="spacingAndGlyphs">Target y:CIE31</text>
<text x="775.8" y="658.3" font-size="16.00" fill="#f4f4f4" textLength="60.8" lengthAdjust="spacingAndGlyphs">0,3714</text>
<text x="871.75" y="658.3" font-size="16.00" fill="#f4f4f4" textLength="60.8" lengthAdjust="spacingAndGlyphs">0,4103</text>
<text x="967.7" y="658.3" font-size="16.00" fill="#f4f4f4" textLength="60.8" lengthAdjust="spacingAndGlyphs">0,4517</text>
<text x="1063.65" y="658.3" font-size="16.00" fill="#f4f4f4" textLength="60.8" lengthAdjust="spacingAndGlyphs">0,4944</text>
<text x="1159.6" y="658.3" font-size="16.00" fill="#f4f4f4" textLength="60.8" lengthAdjust="spacingAndGlyphs">0,5359</text>
<rect x="594.3" y="664.1" width="655.5" height="23.6" fill="#7c7c7c"/>
<text x="610.7" y="681.6" font-size="16.00" fill="#ececec" font-weight="bold" textLength="81.4" lengthAdjust="spacingAndGlyphs">Target Y</text>
<text x="775.8" y="681.6" font-size="16.00" fill="#ececec" textLength="84" lengthAdjust="spacingAndGlyphs">185,8528</text>
<text x="871.75" y="681.6" font-size="16.00" fill="#ececec" textLength="84" lengthAdjust="spacingAndGlyphs">182,5260</text>
<text x="967.7" y="681.6" font-size="16.00" fill="#ececec" textLength="84" lengthAdjust="spacingAndGlyphs">179,7114</text>
<text x="1063.65" y="681.6" font-size="16.00" fill="#ececec" textLength="84" lengthAdjust="spacingAndGlyphs">177,3680</text>
<text x="1159.6" y="681.6" font-size="16.00" fill="#ececec" textLength="84" lengthAdjust="spacingAndGlyphs">175,4935</text>
<rect x="594.3" y="687.4" width="655.5" height="23.6" fill="#444"/>
<text x="610.7" y="704.9" font-size="16.00" fill="#f6f6f6" font-weight="bold" textLength="80.2" lengthAdjust="spacingAndGlyphs">ΔE 2000</text>
<text x="775.8" y="704.9" font-size="16.00" fill="#f4f4f4" textLength="60.8" lengthAdjust="spacingAndGlyphs">2,0073</text>
<text x="871.75" y="704.9" font-size="16.00" fill="#f4f4f4" textLength="60.8" lengthAdjust="spacingAndGlyphs">1,2521</text>
<text x="967.7" y="704.9" font-size="16.00" fill="#f4f4f4" textLength="60.8" lengthAdjust="spacingAndGlyphs">1,5144</text>
<text x="1063.65" y="704.9" font-size="16.00" fill="#f4f4f4" textLength="60.8" lengthAdjust="spacingAndGlyphs">2,6249</text>
<text x="1159.6" y="704.9" font-size="16.00" fill="#f4f4f4" textLength="60.8" lengthAdjust="spacingAndGlyphs">4,9499</text>
<rect x="594.3" y="710.7" width="655.5" height="23.6" fill="#7c7c7c"/>
<text x="610.7" y="728.2" font-size="16.00" fill="#ececec" font-weight="bold" textLength="63.4" lengthAdjust="spacingAndGlyphs">ΔE ITP</text>
<text x="775.8" y="728.2" font-size="16.00" fill="#ececec" textLength="60.8" lengthAdjust="spacingAndGlyphs">3,0170</text>
<text x="871.75" y="728.2" font-size="16.00" fill="#ececec" textLength="60.8" lengthAdjust="spacingAndGlyphs">3,1053</text>
<text x="967.7" y="728.2" font-size="16.00" fill="#ececec" textLength="60.8" lengthAdjust="spacingAndGlyphs">5,2485</text>
<text x="1063.65" y="728.2" font-size="16.00" fill="#ececec" textLength="72.4" lengthAdjust="spacingAndGlyphs">12,6007</text>
<text x="1159.6" y="728.2" font-size="16.00" fill="#ececec" textLength="72.4" lengthAdjust="spacingAndGlyphs">27,3835</text>
<rect x="0" y="735" width="1563" height="60" fill="url(#bar)"/>
<rect x="0" y="735" width="1563" height="60" fill="url(#barh)"/>
<path d="M-5,796V739.8q0,-3.5 3.5,-3.5H39.5q3.5,0 3.5,3.5V796z" fill="url(#tab)"/>
<circle cx="20.5" cy="745.3" r="7.5" fill="url(#ic)"/><path d="M16.3,746.4h8.4l-4.2,-3.8z" fill="#2e2e2e"/>
<rect x="3.9" y="762.9" width="33.8" height="29.2" fill="#ffff00" stroke="#d2d200" stroke-width="1.3" rx="3.5"/>
<path d="M49.0,796V739.8q0,-3.5 3.5,-3.5H195.3q3.5,0 3.5,3.5V796z" fill="url(#tab)"/>
<rect x="54.6" y="741.6" width="139.6" height="35.3" fill="#c1c2a0" stroke="#8c8c74" stroke-width="1" rx="3"/>
<text x="113.537" y="791.5" font-size="11.67" fill="#262626" textLength="20.9267" lengthAdjust="spacingAndGlyphs" stroke="#262626" stroke-width=".3">20%</text>
<path d="M200.9,796V739.8q0,-3.5 3.5,-3.5H347.20000000000005q3.5,0 3.5,3.5V796z" fill="url(#tab)"/>
<rect x="206.5" y="741.6" width="139.6" height="35.3" fill="#c1c184" stroke="#8c8c74" stroke-width="1" rx="3"/>
<text x="265.437" y="791.5" font-size="11.67" fill="#262626" textLength="20.9267" lengthAdjust="spacingAndGlyphs" stroke="#262626" stroke-width=".3">40%</text>
<path d="M352.8,796V739.8q0,-3.5 3.5,-3.5H499.1q3.5,0 3.5,3.5V796z" fill="url(#tab)"/>
<rect x="358.4" y="741.6" width="139.6" height="35.3" fill="#c1c069" stroke="#8c8c74" stroke-width="1" rx="3"/>
<text x="417.337" y="791.5" font-size="11.67" fill="#262626" textLength="20.9267" lengthAdjust="spacingAndGlyphs" stroke="#262626" stroke-width=".3">60%</text>
<path d="M504.70000000000005,796V739.8q0,-3.5 3.5,-3.5H651.0q3.5,0 3.5,3.5V796z" fill="url(#tab)"/>
<rect x="510.3" y="741.6" width="139.6" height="35.3" fill="#c1c044" stroke="#8c8c74" stroke-width="1" rx="3"/>
<text x="569.237" y="791.5" font-size="11.67" fill="#262626" textLength="20.9267" lengthAdjust="spacingAndGlyphs" stroke="#262626" stroke-width=".3">80%</text>
<path d="M656.6,796V739.8q0,-3.5 3.5,-3.5H802.9000000000001q3.5,0 3.5,3.5V796z" fill="url(#tabs)"/>
<rect x="662.2" y="741.6" width="139.6" height="35.3" fill="#c2c000" stroke="#585800" stroke-width="1" rx="3"/>
<text x="718.229" y="791.5" font-size="11.67" fill="#fff" font-weight="bold" textLength="26.7412" lengthAdjust="spacingAndGlyphs">100%</text>
<path d="M1240,796V739.8q0,-3.5 3.5,-3.5H1284.5q3.5,0 3.5,3.5V796z" fill="url(#tab)"/>
<path d="M1240,754.4L1288,754.4" stroke="#484848" stroke-width="1.2"/>
<circle cx="1264.5" cy="745" r="7.5" fill="url(#ic)"/><path d="M1260.3,746.4h8.4l-4.2,-3.9z" fill="#2e2e2e"/>
<rect x="1249.2" y="761.2" width="29.2" height="29" fill="url(#gloss)" stroke="#2e2e2e" stroke-width="2.2" rx="4"/>
<rect x="1257" y="768.9" width="13.6" height="13.5" fill="url(#blk)"/>
<path d="M1289.0,765.8V739.5q0,-3.2 3.2,-3.2H1334.9V765.8z" fill="url(#btn)"/>
<circle cx="1312.25" cy="750.9" r="10" fill="url(#ic)"/>
<rect x="1308.25" y="746.9" width="8" height="8" fill="#303030"/>
<path d="M1336.1,765.8V736.3H1380.1000000000001V765.8z" fill="url(#btn)"/>
<circle cx="1358.1" cy="750.9" r="10" fill="url(#ic)"/>
<path d="M1355.1,745.9v10l8.6,-5z" fill="#2a2a2a"/>
<path d="M1381.3,765.8V736.3H1425.0V765.8z" fill="url(#btn)"/>
<circle cx="1403.15" cy="750.9" r="10" fill="url(#ic)"/>
<path d="M1401.3500000000001,746.6h-3v8.8h3M1405.3500000000001,746.6h3v8.8h-3" stroke="#2c2c2c" stroke-width="2" fill="none"/><path d="M1401.8500000000001,751.1999999999999h1M1403.8500000000001,751.1999999999999h1" stroke="#2c2c2c" stroke-width="1.2"/>
<path d="M1426.1999999999998,765.8V736.3H1469.7V765.8z" fill="url(#btn)"/>
<circle cx="1447.95" cy="750.9" r="10" fill="url(#ic)"/>
<path d="M1447.9499999999998,750.9c-1.8,-3.4 -6,-3.4 -6,0s4.2,3.4 6,0s6,-3.4 6,0s-4.2,3.4 -6,0z" stroke="#2c2c2c" stroke-width="1.9" fill="none"/>
<path d="M1470.8999999999999,765.8V736.3H1514.7V765.8z" fill="url(#btn)"/>
<circle cx="1492.8" cy="750.9" r="10" fill="url(#ic)"/>
<path d="M1488.1,750.1a4.8,4.8 0 0 1 8.1,-2.5M1497.5,751.6999999999999a4.8,4.8 0 0 1 -8.1,2.5" stroke="#2c2c2c" stroke-width="2.4" fill="none"/><path d="M1498.8,744.6999999999999v5.4h-5.4zM1486.8,757.1v-5.4h5.4z" fill="#2c2c2c"/>
<rect x="1515.9" y="736.3" width="47.1" height="29.5" fill="#353535"/>
<circle cx="1538.7" cy="751" r="10" fill="url(#dis)"/>
<path d="M1289,796V770.4q0,-3.2 3.2,-3.2H1424.9V796z" fill="url(#btn2)"/>
<path d="M1426.1,796V767.2H1563V796z" fill="url(#btn2)"/>
<circle cx="1319.6" cy="782.2" r="10" fill="url(#ic)"/><circle cx="1532.6" cy="782.2" r="10" fill="url(#ic)"/>
<path d="M1320,778l-4.6,4.2l4.6,4.3M1324,778l-4.6,4.2l4.6,4.3M1532.2,778l4.6,4.2l-4.6,4.3M1528.2,778l4.6,4.2l-4.6,4.3" stroke="#303030" stroke-width="1.15" fill="none"/>
<text x="1347.2" y="789.6" font-size="22.03" fill="#343434" textLength="49.8" lengthAdjust="spacingAndGlyphs" stroke="#343434" stroke-width=".7">Back</text>
<text x="1453.8" y="789.6" font-size="22.03" fill="#343434" textLength="50.6" lengthAdjust="spacingAndGlyphs" stroke="#343434" stroke-width=".7">Next</text>
<path fill-rule="evenodd" fill="#c6c410" d="M906.2,11.4H1531.4V514.6H906.2zM912,18.3H1526V509.1H912z"/>
<text x="1181.12" y="34.5" font-size="12.51" fill="#e6e6e6" textLength="73.7662" lengthAdjust="spacingAndGlyphs">CIE 1976 u&#x27;v&#x27;</text>
<rect x="945.5" y="39.5" width="577" height="444" fill="#242424"/>
</svg>
<div id="ciew"><div id="cie"><b><i style="margin-left:29.5px;width:46px;background:linear-gradient(90deg,#0f0,#0f0,#0f0,#0f0,#0f0)"></i><i style="margin-left:17.5px;width:85px;background:linear-gradient(90deg,#00ff02,#00ff01,#0f0,#0f0,#0f0,#0f0,#0f0,#0f0,#09ff00)"></i><i style="margin-left:12.5px;width:111px;background:linear-gradient(90deg,#00ff04,#00ff03,#00ff02,#00ff01,#0f0,#0f0,#0f0,#0f0,#07ff00,#16ff00,#29ff00)"></i><i style="margin-left:9.5px;width:133px;background:linear-gradient(90deg,#00ff06,#00ff05,#00ff04,#00ff03,#00ff02,#00ff01,#0f0,#0f0,#03ff00,#1f0,#23ff00,#38ff00,#51ff00)"></i><i style="margin-left:6.5px;width:154px;background:linear-gradient(90deg,#00ff08,#00ff07,#00ff06,#00ff05,#00ff04,#00ff03,#00ff02,#00ff01,#06ff00,#16ff00,#2bff00,#43ff00,#5fff00,#7fff00)"></i><i style="margin-left:4.5px;width:174px;background:linear-gradient(90deg,#00ff0b,#00ff0a,#00ff09,#00ff08,#00ff06,#00ff05,#00ff04,#00ff03,#01ff02,#0fff01,#2f0,#39ff00,#53ff00,#71ff00,#92ff00,#b8ff00)"></i><i style="margin-left:3.5px;width:192px;background:linear-gradient(90deg,#00ff0d,#00ff0c,#00ff0b,#00ff0a,#00ff09,#00ff08,#00ff06,#00ff05,#03ff04,#12ff03,#27ff02,#3fff01,#5cff00,#7cff00,#a1ff00,#caff00,#f9ff00)"></i><i style="margin-left:2.5px;width:211px;background:linear-gradient(90deg,#00ff10,#00ff0f,#00ff0e,#00ff0c,#00ff0b,#00ff0a,#00ff09,#00ff08,#00ff07,#0dff05,#1fff04,#36ff03,#51ff02,#6fff01,#91ff00,#b8ff00,#e4ff00,#ffeb00,#ffc500)"></i><i style="margin-left:1.5px;width:229px;background:linear-gradient(90deg,#00ff12,#0f1,#00ff10,#00ff0f,#00ff0e,#00ff0d,#00ff0c,#00ff0b,#00ff0a,#08ff08,#18ff07,#2dff06,#46ff05,#63ff03,#83ff02,#a7ff01,#cfff00,#fdff00,#ffd600,#ffb400,#f90)"></i><i style="margin-left:0.5px;width:248px;background:linear-gradient(90deg,#00ff15,#00ff14,#00ff13,#00ff12,#0f1,#00ff10,#00ff0f,#00ff0d,#00ff0c,#0aff0b,#1cff0a,#33ff08,#4eff07,#6cff06,#8fff04,#b6ff03,#e2ff01,#ffec00,#ffc400,#ffa500,#ff8c00,#ff7800)"></i><i style="margin-left:-0.5px;width:266px;background:linear-gradient(90deg,#00ff18,#00ff17,#00ff16,#00ff15,#00ff14,#00ff13,#00ff12,#0f1,#00ff10,#05ff0e,#16ff0d,#2bff0c,#44ff0a,#61ff09,#81ff08,#a6ff06,#d0ff05,#feff03,#ffd401,#ffb200,#ff9700,#ff8100,#ff6f00,#ff6000)"></i><i style="margin-left:-0.5px;width:283px;background:linear-gradient(90deg,#00ff1a,#00ff1a,#00ff19,#00ff18,#00ff17,#00ff16,#00ff15,#00ff14,#00ff13,#07ff11,#19ff10,#2fff0f,#4aff0d,#68ff0c,#8bff0a,#b2ff09,#deff07,#ffef05,#ffc603,#ffa701,#ff8d00,#ff7800,#ff6700,#ff5900,#ff4d00)"></i><i style="margin-left:-0.5px;width:301px;background:linear-gradient(90deg,#00ff1d,#00ff1d,#00ff1c,#00ff1b,#00ff1a,#00ff19,#00ff18,#00ff17,#00ff16,#05ff15,#15ff14,#2aff12,#43ff11,#60ff10,#81ff0e,#a7ff0d,#d1ff0b,#fffd0a,#ffd207,#ffb004,#ff9503,#ff7f01,#ff6d00,#ff5e00,#ff5100,#ff4600,#ff3d00)"></i><i style="margin-left:-0.5px;width:318px;background:linear-gradient(90deg,#00ff20,#00ff20,#00ff1f,#00ff1e,#00ff1d,#00ff1c,#00ff1b,#00ff1a,#00ff19,#06ff18,#18ff17,#2eff16,#48ff15,#67ff13,#8aff12,#b2ff10,#deff0f,#ffee0c,#ffc509,#ffa506,#ff8c04,#ff7703,#ff6601,#ff5701,#ff4b00,#ff4100,#ff3800,#ff3000)"></i><i style="margin-left:-0.5px;width:336px;background:linear-gradient(90deg,#00ff23,#00ff23,#0f2,#00ff21,#00ff20,#00ff1f,#00ff1f,#00ff1e,#00ff1d,#08ff1c,#1bff1b,#33ff19,#4fff18,#6fff17,#94ff15,#beff14,#eeff12,#ffdf0f,#ffb90b,#ff9b08,#ff8306,#ff6f04,#ff5f03,#ff5101,#ff4601,#ff3c00,#ff3400,#ff2c00,#ff2600)"></i><i style="margin-left:-0.5px;width:353px;background:linear-gradient(90deg,#00ff26,#00ff26,#00ff25,#00ff24,#00ff24,#00ff23,#0f2,#00ff21,#00ff21,#05ff20,#16ff1f,#2dff1e,#47ff1c,#66ff1b,#89ff1a,#b2ff19,#dfff17,#ffed14,#ffc410,#ffa40c,#ff8a09,#ff7607,#ff6505,#ff5604,#ff4a02,#ff4001,#ff3701,#ff2f00,#ff2900,#ff2300,#ff1e00)"></i><i style="margin-left:-0.5px;width:370px;background:linear-gradient(90deg,#00ff2a,#00ff29,#00ff29,#00ff28,#00ff27,#00ff27,#00ff26,#00ff25,#00ff24,#06ff23,#19ff22,#30ff22,#4cff21,#6cff1f,#91ff1e,#bbff1d,#ebff1c,#ffe117,#ffba12,#ff9c0e,#ff830b,#ff6f08,#ff5f06,#ff5105,#ff4603,#ff3c02,#ff3301,#ff2c01,#ff2600,#ff2000,#ff1b00,#ff1700)"></i><i style="margin-left:-0.5px;width:388px;background:linear-gradient(90deg,#00ff2d,#00ff2c,#00ff2c,#00ff2b,#00ff2b,#00ff2a,#00ff2a,#00ff29,#00ff28,#04ff28,#15ff27,#2bff26,#46ff25,#65ff24,#89ff23,#b1ff22,#dfff21,#ffec1d,#ffc317,#ffa312,#ff890f,#ff740c,#ff6309,#ff5507,#ff4906,#ff3f04,#ff3603,#ff2e02,#ff2801,#ff2201,#ff1d00,#ff1800,#ff1400,#f10)"></i><i style="margin-left:-0.5px;width:405px;background:linear-gradient(90deg,#00ff30,#00ff30,#00ff2f,#00ff2f,#00ff2f,#00ff2e,#00ff2d,#00ff2d,#00ff2c,#05ff2c,#17ff2b,#2eff2a,#4aff29,#6bff29,#90ff28,#baff27,#eaff26,#ffe120,#ffba1a,#ff9b15,#ff8211,#ff6e0e,#ff5e0b,#ff5009,#ff4507,#ff3b05,#ff3204,#ff2b03,#ff2502,#ff1f01,#ff1a01,#ff1600,#ff1200,#ff0f00,#ff0c00)"></i><i style="margin-left:-0.5px;width:422px;background:linear-gradient(90deg,#00ff34,#0f3,#0f3,#0f3,#00ff32,#00ff32,#00ff32,#00ff31,#00ff31,#02ff30,#13ff30,#29ff2f,#44ff2e,#63ff2e,#87ff2d,#b0ff2c,#deff2b,#ffed28,#ffc320,#ffa21a,#ff8915,#ff7411,#ff620e,#ff540c,#ff480a,#ff3e08,#ff3506,#ff2d05,#ff2704,#ff2103,#ff1c02,#ff1801,#ff1401,#ff1000,#ff0d00,#ff0b00,#ff0800)"></i><i style="margin-left:-0.5px;width:440px;background:linear-gradient(90deg,#00ff37,#00ff37,#00ff37,#00ff37,#00ff36,#00ff36,#00ff36,#00ff35,#00ff35,#04ff34,#15ff34,#2dff34,#49ff33,#69ff33,#8fff32,#baff31,#eaff31,#ffe12a,#ffb922,#ff9a1c,#ff8117,#ff6d13,#ff5d10,#ff4f0d,#ff440b,#ff3a09,#ff3107,#ff2a06,#ff2405,#ff1e04,#ff1a03,#ff1502,#ff1201,#ff0e01,#ff0b00,#ff0900,#ff0700,#ff0500)"></i><i style="margin-left:-0.5px;width:457px;background:linear-gradient(90deg,#00ff3b,#00ff3b,#00ff3b,#00ff3a,#00ff3a,#00ff3a,#00ff3a,#00ff3a,#00ff39,#02ff39,#12ff39,#28ff39,#43ff38,#62ff38,#87ff38,#b0ff37,#dfff37,#ffeb32,#ffc129,#ffa122,#ff871c,#ff7217,#ff6114,#ff5310,#ff470e,#ff3d0c,#ff340a,#ff2c08,#ff2607,#ff2005,#ff1b04,#ff1703,#ff1303,#ff0f02,#ff0c01,#ff0a01,#ff0700,#ff0500,#ff0400,#ff0200)"></i><i style="margin-left:-0.5px;width:475px;background:linear-gradient(90deg,#00ff3f,#00ff3f,#00ff3f,#00ff3e,#00ff3e,#00ff3e,#00ff3e,#00ff3e,#00ff3e,#03ff3e,#14ff3e,#2bff3e,#47ff3d,#68ff3d,#8eff3d,#b9ff3d,#eaff3d,#ffe035,#ffb82b,#ff9924,#ff801e,#ff6c19,#ff5c15,#ff4e12,#ff420f,#ff390d,#ff300b,#ff2909,#ff2308,#ff1e06,#ff1905,#ff1504,#ff1103,#ff0e03,#ff0b02,#ff0801,#ff0601,#ff0401,#ff0300,#ff0100,#f00)"></i><i style="margin-left:-0.5px;width:492px;background:linear-gradient(90deg,#00ff42,#00ff42,#00ff43,#00ff43,#00ff43,#00ff43,#00ff43,#00ff43,#00ff43,#03ff43,#15ff43,#2dff43,#4aff43,#6dff43,#94ff43,#c1ff43,#f4ff43,#ffd738,#ffb02e,#ff9226,#ff7a20,#ff671b,#ff5717,#ff4a14,#ff3f11,#ff360e,#ff2e0c,#ff270a,#ff2109,#ff1b07,#ff1706,#ff1305,#ff0f04,#ff0c03,#ff0a03,#ff0702,#ff0501,#ff0301,#ff0201,#ff0100,#f00,#f00)"></i><i style="margin-left:-0.5px;width:509px;background:linear-gradient(90deg,#00ff46,#00ff46,#00ff47,#00ff47,#00ff47,#00ff47,#00ff47,#00ff47,#00ff47,#01ff48,#12ff48,#29ff48,#45ff48,#66ff49,#8cff49,#b7ff49,#e9ff49,#ffe141,#ffb835,#ff982d,#ff7f25,#ff6b20,#ff5b1b,#ff4d17,#ff4214,#ff3811,#ff300f,#ff290d,#ff220b,#ff1d09,#ff1808,#ff1407,#ff1006,#ff0d05,#ff0a04,#ff0803,#ff0603,#ff0402,#ff0201,#ff0101,#ff0001,#f00,#f00,#f00)"></i><i style="margin-left:-0.5px;width:527px;background:linear-gradient(90deg,#00ff4a,#00ff4a,#00ff4b,#00ff4b,#00ff4b,#00ff4c,#00ff4c,#00ff4c,#00ff4c,#02ff4d,#14ff4d,#2cff4e,#49ff4e,#6bff4f,#93ff4f,#c0ff50,#f4ff50,#ffd644,#ffaf38,#ff912f,#ff7928,#f62,#ff561d,#ff4919,#ff3e15,#ff3513,#ff2d10,#ff260e,#ff200c,#ff1b0a,#ff1609,#ff1208,#ff0f07,#ff0c06,#ff0905,#ff0704,#ff0503,#ff0302,#ff0102,#ff0001,#ff0001,#ff0001,#f00,#f00,#f00)"></i><i style="margin-left:-0.5px;width:544px;background:linear-gradient(90deg,#00ff4e,#00ff4f,#00ff4f,#00ff4f,#00ff50,#00ff50,#00ff51,#00ff51,#00ff52,#00ff52,#10ff53,#27ff53,#44ff54,#65ff55,#8bff55,#b7ff56,#eaff57,#ffdf4d,#ffb640,#ff9735,#ff7e2d,#ff6a27,#ff5a21,#ff4c1d,#ff4019,#ff3716,#ff2f13,#ff2710,#ff210e,#ff1c0d,#ff170b,#ff1309,#ff1008,#ff0c07,#ff0a06,#ff0705,#ff0504,#ff0304,#ff0203,#ff0102,#ff0002,#ff0001,#ff0001,#ff0001,#f00,#f00,#f00)"></i><i style="margin-left:-0.5px;width:562px;background:linear-gradient(90deg,#00ff52,#00ff53,#00ff53,#00ff54,#00ff54,#0f5,#0f5,#00ff56,#00ff57,#01ff58,#12ff58,#2aff59,#47ff5a,#6aff5b,#92ff5c,#c0ff5d,#f4ff5e,#ffd650,#ffae42,#ff9038,#ff782f,#ff6529,#ff5523,#ff481e,#ff3d1a,#ff3417,#ff2c14,#ff2512,#ff1f0f,#ff1a0e,#ff150c,#ff110a,#ff0e09,#ff0b08,#ff0807,#ff0606,#ff0405,#ff0204,#ff0104,#ff0003,#ff0002,#ff0002,#ff0001,#ff0001,#ff0001,#f00,#f00,#f00)"></i><i style="margin-left:-0.5px;width:578px;background:linear-gradient(90deg,#00ff57,#00ff57,#00ff58,#00ff58,#00ff59,#00ff5a,#00ff5a,#00ff5b,#00ff5c,#00ff5d,#0fff5e,#25ff5f,#41ff60,#63ff61,#8aff63,#b6ff64,#e9ff65,#ffdf5a,#ffb64b,#ff963f,#ff7d36,#ff692e,#ff5928,#ff4b23,#ff401e,#ff361a,#ff2e17,#ff2714,#ff2012,#ff1b10,#ff170e,#ff120c,#ff0f0b,#ff0c0a,#ff0908,#ff0707,#ff0506,#ff0306,#ff0105,#ff0004,#ff0003,#ff0003,#ff0002,#ff0002,#ff0001,#ff0001,#ff0001,#f00,#f00,#f00)"></i><i style="margin-left:0.5px;width:577px;background:linear-gradient(90deg,#00ff5b,#00ff5c,#00ff5c,#00ff5d,#00ff5e,#00ff5f,#00ff60,#00ff61,#00ff62,#00ff63,#0fff64,#26ff65,#43ff66,#65ff68,#8cff6a,#b9ff6b,#edff6d,#ffdc60,#ffb350,#ff9443,#ff7b39,#ff6731,#ff572b,#ff4a25,#ff3e21,#ff351d,#ff2d19,#ff2616,#ff2014,#ff1a12,#ff1610,#ff120e,#ff0e0c,#ff0b0b,#ff090a,#ff0608,#ff0407,#ff0307,#ff0106,#ff0005,#ff0004,#ff0004,#ff0003,#ff0003,#ff0002,#ff0002,#ff0001,#ff0001,#ff0001,#f00)"></i><i style="margin-left:0.5px;width:577px;background:linear-gradient(90deg,#00ff5f,#00ff60,#00ff61,#00ff62,#00ff63,#00ff64,#00ff65,#0f6,#00ff67,#00ff69,#0fff6a,#26ff6b,#42ff6d,#64ff6f,#8cff71,#b9ff73,#eeff75,#ffdb67,#ffb255,#ff9348,#ff7a3d,#ff6635,#ff562e,#ff4928,#ff3e23,#ff341f,#ff2c1c,#ff2518,#ff1f16,#ff1a13,#ff1511,#ff110f,#ff0e0e,#ff0b0c,#ff080b,#ff060a,#ff0409,#ff0208,#ff0107,#ff0006,#ff0005,#ff0004,#ff0004,#ff0003,#ff0003,#ff0002,#ff0002,#ff0001,#ff0001,#ff0001)"></i><i style="margin-left:1.5px;width:576px;background:linear-gradient(90deg,#00ff64,#00ff65,#0f6,#00ff67,#00ff68,#00ff69,#00ff6a,#00ff6c,#00ff6d,#01ff6f,#14ff71,#2dff72,#4cff74,#71ff77,#9bff79,#ccff7b,#fff97b,#ffc865,#ffa355,#ff8648,#ff6f3d,#ff5d35,#ff4e2e,#ff4228,#ff3724,#ff2f1f,#ff271c,#ff2119,#ff1b16,#ff1614,#ff1212,#ff0f10,#ff0b0e,#ff090d,#ff060b,#ff040a,#ff0209,#ff0108,#ff0007,#ff0006,#ff0005,#ff0005,#ff0004,#ff0003,#ff0003,#ff0002,#ff0002,#ff0002,#ff0001)"></i><i style="margin-left:1.5px;width:576px;background:linear-gradient(90deg,#00ff68,#00ff69,#00ff6b,#00ff6c,#00ff6d,#00ff6f,#00ff70,#00ff72,#00ff73,#01ff75,#13ff77,#2cff79,#4bff7b,#70ff7e,#9bff81,#cdff83,#fff883,#ffc76c,#ffa25a,#ff854c,#ff6e42,#ff5c39,#ff4d31,#ff412b,#ff3726,#ff2e22,#ff271e,#ff201b,#ff1b18,#ff1615,#ff1213,#ff0e11,#ff0b0f,#ff080e,#ff060c,#ff040b,#ff020a,#ff0109,#ff0008,#ff0007,#ff0006,#ff0005,#ff0005,#ff0004,#ff0004,#ff0003,#ff0003,#ff0002,#ff0002)"></i><i style="margin-left:1.5px;width:576px;background:linear-gradient(90deg,#00ff6d,#00ff6e,#00ff70,#00ff71,#00ff72,#00ff74,#00ff76,#0f7,#00ff79,#01ff7b,#12ff7e,#2cff80,#4bff83,#70ff85,#9bff88,#cdff8c,#fff78b,#ffc672,#ffa160,#ff8451,#ff6d46,#ff5b3c,#ff4d35,#ff402e,#ff3629,#ff2d24,#ff2620,#ff201d,#ff1a1a,#ff1517,#ff1115,#ff0e13,#ff0b11,#ff080f,#ff060e,#ff040c,#ff020b,#ff010a,#ff0009,#ff0008,#ff0007,#ff0006,#ff0006,#ff0005,#ff0004,#ff0004,#ff0003,#ff0003,#ff0002)"></i><i style="margin-left:2.5px;width:575px;background:linear-gradient(90deg,#00ff72,#00ff73,#00ff75,#00ff76,#00ff78,#00ff7a,#00ff7c,#00ff7e,#00ff80,#01ff82,#13ff84,#2dff87,#4dff8a,#72ff8d,#9eff91,#d1ff95,#fff392,#ffc278,#ff9e64,#ff8255,#ff6b4a,#ff5a40,#ff4b38,#ff3f31,#ff352c,#ff2c27,#ff2523,#ff1f1f,#ff191c,#ff1519,#ff1117,#ff0d14,#ff0a12,#ff0711,#ff050f,#ff030e,#ff020c,#ff000b,#ff000a,#ff0009,#ff0008,#ff0007,#ff0006,#ff0006,#ff0005,#ff0004,#ff0004,#ff0003,#ff0003)"></i><i style="margin-left:2.5px;width:575px;background:linear-gradient(90deg,#0f7,#00ff78,#00ff7a,#00ff7c,#00ff7d,#00ff7f,#00ff81,#00ff84,#00ff86,#00ff89,#12ff8b,#2cff8e,#4cff92,#72ff95,#9eff99,#d1ff9d,#fff29a,#ffc17f,#ff9d6a,#ff815a,#ff6b4e,#ff5944,#ff4a3b,#ff3e34,#ff342e,#ff2c29,#ff2425,#ff1e21,#ff191e,#ff141b,#ff1018,#ff0d16,#ff0a14,#ff0712,#ff0510,#ff030f,#ff010d,#ff000c,#ff000b,#ff000a,#ff0009,#ff0008,#ff0007,#ff0006,#ff0006,#ff0005,#ff0005,#ff0004,#ff0004)"></i><i style="margin-left:3.5px;width:574px;background:linear-gradient(90deg,#00ff7c,#00ff7d,#00ff7f,#00ff81,#00ff83,#00ff85,#0f8,#00ff8a,#00ff8d,#01ff90,#13ff93,#2dff96,#4eff9a,#74ff9e,#a1ffa2,#d5ffa7,#ffeea1,#ffbe84,#ff9a6f,#ff7e5f,#ff6952,#ff5747,#ff493e,#ff3d37,#ff3331,#ff2b2c,#ff2327,#ff1d23,#ff1820,#ff131d,#ff101a,#ff0c17,#ff0915,#ff0713,#ff0412,#ff0310,#ff010f,#ff000d,#ff000c,#ff000b,#ff000a,#ff0009,#ff0008,#ff0007,#ff0007,#ff0006,#ff0005,#ff0005,#ff0004)"></i><i style="margin-left:3.5px;width:574px;background:linear-gradient(90deg,#00ff81,#00ff83,#00ff85,#00ff87,#00ff89,#00ff8b,#00ff8e,#00ff91,#00ff93,#00ff97,#12ff9a,#2dff9e,#4dffa2,#74ffa6,#a1ffab,#d6ffb0,#ffeda9,#ffbd8b,#ff9975,#ff7d64,#ff6856,#ff564b,#ff4842,#ff3c3a,#ff3234,#ff2a2e,#ff232a,#ff1d25,#ff1722,#ff131f,#ff0f1c,#ff0c19,#ff0917,#ff0615,#ff0413,#ff0211,#ff0110,#ff000e,#ff000d,#ff000c,#ff000b,#ff000a,#ff0009,#ff0008,#ff0007,#ff0007,#ff0006,#ff0005,#ff0005)"></i><i style="margin-left:4.5px;width:573px;background:linear-gradient(90deg,#00ff86,#0f8,#00ff8a,#00ff8c,#00ff8f,#00ff92,#00ff94,#00ff97,#00ff9b,#01ff9e,#13ffa2,#2effa6,#4fffaa,#76ffaf,#a4ffb4,#d9ffba,#ffe9b0,#ffba91,#ff967a,#ff7b68,#ff665a,#ff544f,#ff4645,#ff3b3d,#ff3137,#ff2931,#ff222c,#ff1c28,#ff1724,#ff1220,#ff0e1d,#ff0b1b,#ff0818,#ff0616,#ff0414,#ff0213,#ff0111,#ff0010,#ff000e,#ff000d,#ff000c,#ff000b,#ff000a,#ff0009,#ff0008,#ff0007,#ff0007,#ff0006,#ff0005)"></i><i style="margin-left:5.5px;width:572px;background:linear-gradient(90deg,#00ff8b,#00ff8e,#00ff90,#00ff92,#00ff95,#00ff98,#00ff9b,#00ff9e,#00ffa2,#01ffa6,#14ffaa,#2fffae,#51ffb3,#79ffb8,#a7ffbe,#ddffc4,#ffe5b7,#ffb697,#ff947f,#ff796d,#ff645e,#ff5352,#ff4548,#ff3a40,#ff3039,#ff2833,#ff212e,#ff1b2a,#ff1626,#ff1222,#ff0e1f,#ff0b1c,#ff081a,#ff0518,#ff0316,#ff0214,#ff0012,#f01,#ff000f,#ff000e,#ff000d,#ff000c,#ff000b,#ff000a,#ff0009,#ff0008,#ff0007,#ff0007,#ff0006)"></i><i style="margin-left:5.5px;width:572px;background:linear-gradient(90deg,#00ff91,#00ff93,#00ff96,#00ff98,#00ff9b,#00ff9e,#00ffa2,#00ffa5,#00ffa9,#01ffad,#13ffb2,#2fffb6,#50ffbc,#78ffc1,#a7ffc8,#deffcf,#ffe4bf,#ffb59e,#ff9285,#ff7872,#ff6363,#ff5256,#ff444c,#ff3944,#ff2f3c,#ff2736,#ff2031,#ff1a2c,#ff1528,#ff1124,#ff0d21,#ff0a1e,#ff071c,#ff0519,#ff0317,#ff0115,#ff0013,#ff0012,#ff0010,#ff000f,#ff000e,#ff000d,#ff000c,#ff000b,#ff000a,#ff0009,#ff0008,#ff0008,#ff0007)"></i><i style="margin-left:6.5px;width:571px;background:linear-gradient(90deg,#00ff96,#0f9,#00ff9c,#00ff9f,#00ffa2,#00ffa5,#00ffa9,#00ffac,#00ffb1,#01ffb5,#14ffba,#30ffbf,#52ffc5,#7bffcb,#abffd2,#e2ffda,#ffe0c6,#ffb2a4,#ff908b,#ff7677,#ff6167,#ff505a,#ff434f,#ff3747,#ff2e3f,#ff2639,#ff1f33,#ff1a2e,#ff152a,#ff1026,#ff0d23,#ff0a20,#ff071d,#ff051b,#ff0319,#ff0117,#ff0015,#ff0013,#ff0012,#ff0010,#ff000f,#ff000e,#ff000d,#ff000c,#ff000b,#ff000a,#ff0009,#ff0008,#ff0008)"></i><i style="margin-left:6.5px;width:571px;background:linear-gradient(90deg,#00ff9c,#00ff9f,#00ffa2,#00ffa5,#00ffa8,#00ffac,#00ffb0,#00ffb4,#00ffb8,#00ffbd,#13ffc2,#2fffc8,#52ffce,#7bffd5,#abffdc,#e3ffe5,#ffdfcf,#ffb1ac,#ff8f91,#ff747c,#ff606c,#ff4f5e,#ff4253,#ff374a,#ff2d42,#ff253b,#ff1f36,#ff1931,#ff142c,#ff1028,#ff0c25,#ff0922,#ff071f,#ff041c,#ff021a,#ff0118,#ff0016,#ff0014,#ff0013,#f01,#ff0010,#ff000f,#ff000e,#ff000d,#ff000c,#ff000b,#ff000a,#ff0009,#ff0008)"></i><i style="margin-left:7.5px;width:570px;background:linear-gradient(90deg,#00ffa2,#00ffa5,#00ffa8,#00ffab,#00ffaf,#00ffb3,#00ffb7,#0fb,#00ffc0,#01ffc5,#14ffcb,#30ffd1,#53ffd8,#7dffdf,#aeffe7,#e7fff0,#ffdbd6,#ffaeb2,#ff8c96,#ff7281,#ff5e70,#ff4e62,#ff4057,#ff354d,#ff2c45,#ff243e,#ff1e38,#ff1833,#ff132e,#ff0f2a,#ff0c27,#ff0923,#ff0620,#ff041e,#ff021c,#ff0119,#ff0017,#ff0016,#ff0014,#ff0012,#f01,#ff0010,#ff000f,#ff000e,#ff000d,#ff000c,#ff000b,#ff000a,#ff0009)"></i><i style="margin-left:8.5px;width:567px;background:linear-gradient(90deg,#00ffa8,#00ffab,#00ffae,#00ffb2,#00ffb6,#00ffba,#00ffbe,#00ffc3,#00ffc8,#01ffce,#14ffd4,#31ffdb,#54ffe2,#7effea,#affff2,#e8fffc,#ffd9e0,#ffadba,#ff8b9d,#ff7287,#ff5d75,#ff4d67,#ff405b,#ff3551,#ff2c49,#ff2441,#ff1e3b,#ff1836,#ff1331,#ff0f2d,#ff0c29,#ff0825,#ff0622,#ff0420,#ff021d,#ff001b,#ff0019,#ff0017,#ff0015,#ff0014,#ff0012,#f01,#ff0010,#ff000f,#ff000e,#ff000d,#ff000c,#ff000b,#ff000a)"></i><i style="margin-left:8.5px;width:565px;background:linear-gradient(90deg,#00ffae,#00ffb1,#00ffb5,#00ffb8,#00ffbd,#00ffc1,#00ffc6,#00ffcb,#00ffd0,#00ffd6,#13ffdd,#2fffe4,#52ffeb,#7bfff4,#acfffd,#dff7ff,#ffdbec,#ffaec4,#ff8ca5,#ff728e,#ff5e7b,#ff4d6c,#ff4060,#ff3555,#ff2c4c,#ff2445,#ff1d3e,#ff1839,#ff1334,#ff0f2f,#ff0b2b,#ff0828,#ff0625,#ff0422,#ff021f,#ff001d,#ff001b,#ff0019,#ff0017,#ff0015,#ff0014,#ff0012,#f01,#ff0010,#ff000f,#ff000e,#ff000d,#ff000c,#ff000b)"></i><i style="margin-left:9.5px;width:562px;background:linear-gradient(90deg,#00ffb4,#00ffb7,#0fb,#00ffc0,#00ffc4,#00ffc9,#00ffce,#00ffd4,#00ffda,#02ffe0,#18ffe8,#36ffef,#5cfff8,#87fdff,#b5f3ff,#e6e9ff,#ffc9e6,#ff9fc0,#ff80a3,#ff688c,#ff567a,#ff466b,#ff3a5f,#ff3055,#ff274c,#ff2044,#ff1a3e,#ff1538,#ff1033,#ff0c2f,#ff092b,#ff0628,#ff0425,#ff0222,#ff011f,#ff001d,#ff001b,#ff0019,#ff0017,#ff0015,#ff0014,#ff0012,#f01,#ff0010,#ff000f,#ff000e,#ff000d,#ff000c)"></i><i style="margin-left:9.5px;width:560px;background:linear-gradient(90deg,#00ffba,#00ffbe,#00ffc2,#00ffc6,#00ffcb,#00ffd0,#00ffd6,#00ffdc,#00ffe2,#01ffe9,#16fff1,#34fff9,#59fcff,#80f3ff,#abe9ff,#dadfff,#ffcbf2,#ffa0ca,#ff81ab,#ff6993,#ff5680,#ff4670,#ff3a64,#ff3059,#ff2750,#ff2048,#ff1a41,#ff153b,#ff1036,#ff0c32,#ff092e,#ff062a,#ff0427,#ff0224,#ff0121,#ff001f,#ff001c,#ff001a,#ff0018,#ff0017,#ff0015,#ff0014,#ff0012,#f01,#ff0010,#ff000f,#ff000e,#ff000d)"></i><i style="margin-left:10.5px;width:557px;background:linear-gradient(90deg,#00ffc0,#00ffc5,#00ffc9,#00ffce,#00ffd3,#00ffd8,#00ffde,#00ffe4,#00ffeb,#01fff3,#16fffb,#34fbff,#55f2ff,#7be9ff,#a4dfff,#d1d6ff,#ffcafc,#ffa0d2,#ff80b2,#ff6899,#ff5585,#ff4675,#ff3a68,#ff2f5d,#ff2754,#ff204b,#ff1944,#ff143e,#ff1039,#ff0c34,#ff0930,#ff062c,#ff0429,#ff0226,#ff0023,#ff0020,#ff001e,#ff001c,#ff001a,#ff0018,#ff0017,#ff0015,#ff0014,#ff0012,#f01,#ff0010,#ff000f,#ff000e)"></i><i style="margin-left:11.5px;width:554px;background:linear-gradient(90deg,#00ffc7,#00ffcb,#00ffd0,#00ffd5,#00ffdb,#00ffe0,#00ffe6,#00ffed,#00fff4,#01fffc,#16f9ff,#32f1ff,#52e8ff,#76dfff,#9ed6ff,#c9ccff,#f8c3ff,#ff9fda,#ff7fb9,#ff67a0,#ff548b,#ff457a,#ff396d,#ff2f61,#ff2657,#ff1f4f,#ff1948,#ff1441,#ff103c,#ff0c37,#ff0932,#ff062e,#ff042b,#ff0228,#ff0025,#f02,#ff0020,#ff001e,#ff001c,#ff001a,#ff0018,#ff0016,#ff0015,#ff0014,#ff0012,#f01,#ff0010,#ff000f)"></i><i style="margin-left:11.5px;width:552px;background:linear-gradient(90deg,#00ffce,#00ffd2,#00ffd7,#0fd,#00ffe3,#00ffe9,#00ffef,#00fff7,#0ff,#03f7ff,#19efff,#35e6ff,#56ddff,#7ad4ff,#a2cbff,#cec1ff,#fcb8ff,#ff93d7,#ff76b7,#ff5f9e,#ff4e8a,#ff3f79,#ff346c,#ff2a60,#ff2257,#ff1c4e,#ff1647,#ff1141,#ff0d3b,#ff0a37,#ff0732,#ff042e,#ff022b,#ff0128,#ff0025,#f02,#ff0020,#ff001e,#ff001b,#ff001a,#ff0018,#ff0016,#ff0015,#ff0014,#ff0012,#f01,#ff0010)"></i><i style="margin-left:12.5px;width:549px;background:linear-gradient(90deg,#00ffd5,#00ffda,#00ffdf,#00ffe5,#00ffeb,#00fff1,#00fff8,#00feff,#00f6ff,#03eeff,#18e5ff,#3df,#53d4ff,#76cbff,#9cc3ff,#c6b9ff,#f3b0ff,#ff92e0,#ff75be,#ff5fa4,#ff4d8f,#ff3f7e,#ff3370,#ff2a65,#ff225b,#ff1b52,#ff164a,#f14,#ff0d3e,#ff0939,#ff0635,#ff0431,#ff022d,#ff012a,#ff0027,#ff0024,#ff0021,#ff001f,#ff001d,#ff001b,#ff0019,#ff0018,#ff0016,#ff0015,#ff0013,#ff0012,#f01)"></i><i style="margin-left:13.5px;width:546px;background:linear-gradient(90deg,#00ffdc,#00ffe1,#00ffe7,#00ffed,#00fff3,#00fffa,#00fdff,#00f5ff,#00edff,#03e5ff,#17ddff,#31d4ff,#50ccff,#72c3ff,#97bbff,#bfb2ff,#eaa9ff,#ff91e8,#ff74c5,#ff5eab,#ff4c95,#ff3e83,#ff3375,#ff2969,#ff225e,#ff1b55,#ff154e,#ff1147,#ff0d41,#ff093c,#ff0637,#ff0433,#ff022f,#ff002c,#ff0029,#ff0026,#ff0023,#ff0021,#ff001f,#ff001d,#ff001b,#ff0019,#ff0017,#ff0016,#ff0015,#ff0013,#ff0012)"></i><i style="margin-left:14.5px;width:543px;background:linear-gradient(90deg,#00ffe3,#00ffe9,#0fe,#00fff5,#00fffc,#00fbff,#00f4ff,#00ecff,#00e4ff,#03ddff,#16d5ff,#30ccff,#4dc4ff,#6ebcff,#92b3ff,#b8abff,#e2a2ff,#ff90f1,#ff73cd,#ff5db1,#ff4c9b,#ff3e89,#ff327a,#ff296d,#ff2162,#ff1b59,#ff1551,#ff104a,#ff0c44,#ff093e,#ff063a,#ff0435,#ff0231,#ff002e,#ff002b,#ff0028,#ff0025,#f02,#ff0020,#ff001e,#ff001c,#ff001a,#ff0019,#ff0017,#ff0016,#ff0015,#ff0013)"></i><i style="margin-left:14.5px;width:541px;background:linear-gradient(90deg,#00ffea,#00fff0,#00fff6,#00fffd,#00faff,#00f3ff,#00ecff,#00e4ff,#0df,#01d5ff,#14cdff,#2cc5ff,#48bdff,#68b5ff,#8aadff,#b0a4ff,#d89cff,#ff91fc,#ff74d6,#ff5eb9,#ff4ca2,#ff3e8f,#ff327f,#ff2972,#ff2167,#ff1a5d,#ff1555,#ff104d,#ff0c47,#ff0941,#ff063c,#ff0438,#ff0234,#ff0030,#ff002d,#ff002a,#ff0027,#ff0024,#f02,#ff0020,#ff001e,#ff001c,#ff001a,#ff0019,#ff0017,#ff0016,#ff0014)"></i><i style="margin-left:15.5px;width:539px;background:linear-gradient(90deg,#00fff2,#00fff8,#0ff,#00f8ff,#00f1ff,#00eaff,#00e3ff,#00dbff,#00d4ff,#04ccff,#18c4ff,#32bcff,#4eb4ff,#6facff,#91a3ff,#b79bff,#e092ff,#ff83f4,#ff69d0,#ff54b4,#ff449e,#ff378c,#ff2d7c,#ff2470,#ff1d65,#ff175b,#ff1253,#ff0d4c,#ff0a46,#ff0740,#ff043b,#ff0237,#f03,#ff002f,#ff002c,#ff0029,#ff0026,#ff0024,#f02,#ff001f,#ff001d,#ff001c,#ff001a,#ff0018,#ff0017,#ff0016)"></i><i style="margin-left:16.5px;width:536px;background:linear-gradient(90deg,#00fff9,#00feff,#00f7ff,#00f0ff,#00e9ff,#00e2ff,#00dbff,#00d4ff,#0cf,#04c5ff,#18bdff,#30b5ff,#4cadff,#6ba5ff,#8d9dff,#b194ff,#d88cff,#ff82fd,#ff68d8,#ff54bb,#ff44a4,#ff3791,#ff2c81,#ff2474,#ff1c69,#ff165f,#ff1157,#ff0d4f,#ff0949,#ff0643,#ff043e,#ff0239,#ff0035,#ff0031,#ff002e,#ff002b,#ff0028,#ff0026,#ff0023,#ff0021,#ff001f,#ff001d,#ff001b,#ff001a,#ff0018,#ff0017)"></i><i style="margin-left:16.5px;width:534px;background:linear-gradient(90deg,#00fdff,#00f7ff,#00f0ff,#00e9ff,#00e2ff,#00dbff,#00d4ff,#00cdff,#00c6ff,#03beff,#15b7ff,#2dafff,#48a7ff,#659fff,#8697ff,#a98fff,#cf87ff,#f77fff,#ff68e1,#ff54c3,#ff44ab,#ff3797,#ff2c87,#ff2379,#ff1c6d,#ff1663,#ff115a,#ff0d53,#ff094c,#ff0646,#ff0441,#ff023c,#ff0038,#ff0034,#ff0030,#ff002d,#ff002a,#ff0027,#ff0025,#ff0023,#ff0021,#ff001f,#ff001d,#ff001b,#ff0019,#ff0018)"></i><i style="margin-left:17.5px;width:531px;background:linear-gradient(90deg,#00f5ff,#00efff,#00e8ff,#00e2ff,#00dbff,#00d4ff,#00cdff,#00c6ff,#00bfff,#03b8ff,#15b0ff,#2ba9ff,#45a1ff,#6299ff,#8292ff,#a38aff,#c882ff,#ee79ff,#ff67e9,#ff53ca,#ff43b1,#ff369c,#ff2c8c,#ff237d,#ff1c71,#ff1667,#ff115e,#ff0c56,#ff094f,#ff0649,#ff0343,#ff013e,#ff003a,#ff0036,#ff0032,#ff002f,#ff002c,#ff0029,#ff0027,#ff0024,#f02,#ff0020,#ff001e,#ff001c,#ff001b,#ff0019)"></i><i style="margin-left:18.5px;width:528px;background:linear-gradient(90deg,#0ef,#00e7ff,#00e1ff,#00daff,#00d3ff,#0cf,#00c5ff,#00beff,#00b7ff,#06b0ff,#19a8ff,#30a1ff,#4a99ff,#6891ff,#888aff,#aa82ff,#ce7aff,#f572ff,#ff5ee3,#ff4bc5,#ff3cad,#ff3099,#ff2789,#ff1f7b,#ff186f,#ff1265,#ff0e5c,#ff0a55,#ff074e,#ff0448,#ff0243,#ff003e,#ff0039,#ff0035,#ff0032,#ff002f,#ff002c,#ff0029,#ff0026,#ff0024,#f02,#ff0020,#ff001e,#ff001c,#ff001b)"></i><i style="margin-left:19.5px;width:525px;background:linear-gradient(90deg,#00e7ff,#00e0ff,#00daff,#00d3ff,#00cdff,#00c6ff,#00bfff,#00b8ff,#00b1ff,#05aaff,#18a2ff,#2e9bff,#4894ff,#648cff,#8384ff,#a47dff,#c875ff,#ed6dff,#ff5deb,#ff4acc,#ff3cb3,#ff309f,#ff268e,#ff1e80,#ff1873,#ff1269,#ff0e60,#ff0a58,#ff0651,#ff044b,#ff0245,#ff0040,#ff003c,#ff0038,#ff0034,#ff0031,#ff002d,#ff002b,#ff0028,#ff0026,#ff0023,#ff0021,#ff001f,#ff001e,#ff001c)"></i><i style="margin-left:20.5px;width:522px;background:linear-gradient(90deg,#00e0ff,#00d9ff,#00d3ff,#00cdff,#00c6ff,#00bfff,#00b9ff,#00b2ff,#00abff,#05a4ff,#179dff,#2d96ff,#468eff,#6187ff,#7f7fff,#9f78ff,#c170ff,#e669ff,#ff5cf3,#ff4ad3,#ff3bb9,#ff2fa4,#ff2693,#ff1e84,#ff1778,#ff126d,#ff0d63,#ff095b,#ff0654,#ff044e,#ff0248,#ff0043,#ff003e,#ff003a,#ff0036,#f03,#ff002f,#ff002c,#ff002a,#ff0027,#ff0025,#ff0023,#ff0021,#ff001f,#ff001d)"></i><i style="margin-left:20.5px;width:520px;background:linear-gradient(90deg,#00daff,#00d3ff,#00cdff,#00c7ff,#00c0ff,#00baff,#00b3ff,#00acff,#00a6ff,#049fff,#1598ff,#2a91ff,#428aff,#5d82ff,#797bff,#9874ff,#b96cff,#dc65ff,#ff5cfd,#ff4adb,#ff3bc1,#ff2fab,#ff2699,#ff1e89,#ff177c,#ff1271,#ff0d67,#ff095f,#ff0657,#ff0351,#ff014b,#ff0045,#ff0041,#ff003c,#ff0038,#ff0035,#ff0031,#ff002e,#ff002c,#ff0029,#ff0027,#ff0024,#f02,#ff0020,#ff001f)"></i><i style="margin-left:21.5px;width:517px;background:linear-gradient(90deg,#00d3ff,#00cdff,#00c7ff,#00c1ff,#00baff,#00b4ff,#00adff,#00a7ff,#00a0ff,#0499ff,#1493ff,#298cff,#4085ff,#5a7eff,#7677ff,#9470ff,#b468ff,#d561ff,#f95aff,#ff49e3,#ff3ac7,#ff2fb1,#ff259e,#ff1d8e,#ff1781,#ff1175,#ff0d6b,#ff0962,#ff065b,#ff0354,#ff014e,#ff0048,#ff0043,#ff003f,#ff003b,#ff0037,#f03,#ff0030,#ff002d,#ff002b,#ff0028,#ff0026,#ff0024,#f02,#ff0020)"></i><i style="margin-left:22.5px;width:514px;background:linear-gradient(90deg,#00cdff,#00c7ff,#00c1ff,#00baff,#00b4ff,#00adff,#00a7ff,#00a0ff,#009aff,#0793ff,#188cff,#2d85ff,#457eff,#5f77ff,#7b70ff,#9a69ff,#ba62ff,#dc5aff,#ff53fd,#ff41dd,#ff34c2,#ff29ad,#ff209b,#ff198b,#ff137e,#ff0e73,#ff0a69,#ff0761,#ff0459,#ff0252,#ff004c,#ff0047,#ff0042,#ff003e,#ff003a,#ff0036,#f03,#ff0030,#ff002d,#ff002a,#ff0028,#ff0026,#ff0023,#f02)"></i><i style="margin-left:23.5px;width:511px;background:linear-gradient(90deg,#00c7ff,#00c1ff,#0bf,#00b5ff,#00aeff,#00a8ff,#00a2ff,#009bff,#0095ff,#068eff,#1787ff,#2c81ff,#437aff,#5c73ff,#786cff,#9565ff,#b45eff,#d657ff,#f950ff,#ff41e4,#ff33c9,#ff29b2,#ff20a0,#ff1990,#ff1383,#ff0e77,#ff0a6d,#ff0664,#ff045c,#ff0255,#ff004f,#ff004a,#ff0045,#ff0040,#ff003c,#ff0038,#ff0035,#ff0032,#ff002f,#ff002c,#ff0029,#ff0027,#ff0025,#ff0023)"></i><i style="margin-left:24.5px;width:508px;background:linear-gradient(90deg,#00c1ff,#0bf,#00b5ff,#00afff,#00a9ff,#00a3ff,#009dff,#0096ff,#0090ff,#0689ff,#1683ff,#2a7cff,#4176ff,#596fff,#7468ff,#9061ff,#af5aff,#cf53ff,#f14dff,#ff40eb,#ff33cf,#ff28b8,#ff1fa5,#ff1895,#ff1287,#ff0e7b,#ff0a71,#ff0668,#ff0360,#ff0158,#ff0052,#ff004c,#ff0047,#ff0042,#ff003e,#ff003a,#ff0037,#ff0034,#ff0031,#ff002e,#ff002b,#ff0029,#ff0027,#ff0025)"></i><i style="margin-left:24.5px;width:506px;background:linear-gradient(90deg,#00bcff,#00b6ff,#00b0ff,#0af,#00a4ff,#009eff,#0098ff,#0092ff,#008cff,#0585ff,#147fff,#2878ff,#3d72ff,#556bff,#6f65ff,#8b5eff,#a857ff,#c751ff,#e84aff,#ff40f4,#ff33d7,#ff28bf,#ff1fab,#ff189a,#ff128c,#ff0d80,#ff0975,#ff066b,#ff0363,#ff015c,#f05,#ff004f,#ff004a,#ff0045,#ff0041,#ff003d,#ff0039,#ff0036,#ff0032,#ff0030,#ff002d,#ff002a,#ff0028,#ff0026)"></i><i style="margin-left:25.5px;width:503px;background:linear-gradient(90deg,#00b7ff,#00b1ff,#00abff,#00a5ff,#009fff,#09f,#0092ff,#008cff,#0086ff,#0880ff,#1879ff,#2c73ff,#426cff,#5a66ff,#745fff,#9058ff,#ae52ff,#ce4bff,#ef44ff,#ff39ed,#ff2dd1,#ff23ba,#ff1ba7,#ff1497,#ff0f89,#ff0b7d,#ff0773,#ff0469,#ff0261,#ff005a,#ff0054,#ff004e,#ff0049,#f04,#ff0040,#ff003c,#ff0038,#ff0035,#ff0032,#ff002f,#ff002c,#ff002a,#ff0028)"></i><i style="margin-left:26.5px;width:500px;background:linear-gradient(90deg,#00b1ff,#00acff,#00a6ff,#00a0ff,#009aff,#0094ff,#008eff,#08f,#0082ff,#077bff,#1775ff,#2a6fff,#4068ff,#5862ff,#715cff,#8c55ff,#a94eff,#c848ff,#e841ff,#ff38f5,#ff2cd8,#ff22c0,#ff1aac,#ff149c,#ff0f8d,#ff0a81,#ff0776,#ff046d,#ff0165,#ff005d,#ff0057,#ff0051,#ff004b,#ff0046,#ff0042,#ff003e,#ff003a,#ff0037,#ff0034,#ff0031,#ff002e,#ff002c,#ff0029)"></i><i style="margin-left:27.5px;width:497px;background:linear-gradient(90deg,#00acff,#00a7ff,#00a1ff,#009bff,#0095ff,#008fff,#008aff,#0084ff,#007dff,#0777ff,#1771ff,#296bff,#3e65ff,#555fff,#6e58ff,#8852ff,#a44cff,#c245ff,#e13fff,#ff38fc,#ff2cdf,#ff22c6,#ff1ab2,#ff14a1,#ff0e92,#ff0a85,#ff067a,#ff0471,#ff0168,#ff0060,#ff005a,#ff0053,#ff004e,#ff0049,#f04,#ff0040,#ff003c,#ff0039,#ff0036,#f03,#ff0030,#ff002d,#ff002b)"></i><i style="margin-left:28.5px;width:494px;background:linear-gradient(90deg,#00a7ff,#00a2ff,#009cff,#0097ff,#0091ff,#008bff,#0085ff,#007fff,#0079ff,#0774ff,#166eff,#2867ff,#3c61ff,#535bff,#6b55ff,#844fff,#a049ff,#bc42ff,#db3cff,#fa36ff,#ff2be5,#ff21cc,#ff1ab7,#ff13a6,#ff0e97,#ff0a8a,#ff067e,#ff0374,#ff016b,#ff0064,#ff005d,#ff0056,#ff0051,#ff004b,#ff0047,#ff0042,#ff003e,#ff003b,#ff0038,#ff0034,#ff0032,#ff002f,#ff002d)"></i><i style="margin-left:29.5px;width:491px;background:linear-gradient(90deg,#00a3ff,#009dff,#0097ff,#0092ff,#008cff,#0086ff,#0080ff,#007aff,#0075ff,#096fff,#1968ff,#2c62ff,#415cff,#5756ff,#7050ff,#8a4aff,#a644ff,#c33dff,#e237ff,#ff30fc,#ff25df,#ff1dc7,#ff16b3,#ff10a2,#ff0b93,#ff0787,#ff047c,#ff0272,#ff0069,#ff0062,#ff005b,#f05,#ff004f,#ff004a,#ff0045,#ff0041,#ff003d,#ff003a,#ff0037,#ff0034,#ff0031,#ff002e)"></i><i style="margin-left:29.5px;width:490px;background:linear-gradient(90deg,#009eff,#09f,#0093ff,#008eff,#08f,#0082ff,#007dff,#07f,#0071ff,#086bff,#1865ff,#2a5fff,#3e59ff,#5453ff,#6c4dff,#8647ff,#a041ff,#bd3bff,#db35ff,#fa2fff,#ff25e6,#ff1ccd,#ff15b8,#ff0fa7,#ff0b98,#ff078b,#ff047f,#ff0175,#ff006c,#ff0065,#ff005e,#ff0057,#ff0052,#ff004c,#ff0048,#ff0043,#ff003f,#ff003c,#ff0038,#ff0035,#ff0032,#ff0030)"></i><i style="margin-left:30.5px;width:487px;background:linear-gradient(90deg,#009aff,#0095ff,#008fff,#008aff,#0084ff,#007fff,#0079ff,#0073ff,#006eff,#0868ff,#1762ff,#295cff,#3c56ff,#5250ff,#694bff,#8245ff,#9c3fff,#b839ff,#d533ff,#f32dff,#ff24ed,#ff1cd3,#ff15be,#ff0fac,#ff0a9c,#ff068f,#ff0383,#ff0179,#ff0070,#ff0068,#ff0061,#ff005a,#ff0054,#ff004f,#ff004a,#ff0046,#ff0042,#ff003e,#ff003a,#ff0037,#ff0034,#ff0032)"></i><i style="margin-left:31.5px;width:484px;background:linear-gradient(90deg,#0096ff,#0090ff,#008bff,#0086ff,#0080ff,#007bff,#0075ff,#0070ff,#006aff,#0864ff,#165fff,#2859ff,#3b53ff,#504eff,#6648ff,#7e42ff,#983cff,#b237ff,#cf31ff,#ec2bff,#ff24f4,#ff1bd9,#ff14c3,#ff0eb1,#ff0aa1,#ff0693,#ff0387,#ff017d,#ff0073,#ff006b,#ff0064,#ff005d,#ff0057,#ff0052,#ff004d,#ff0048,#f04,#ff0040,#ff003c,#ff0039,#ff0036,#f03)"></i><i style="margin-left:32.5px;width:481px;background:linear-gradient(90deg,#0091ff,#008cff,#0087ff,#0082ff,#007cff,#07f,#0072ff,#006cff,#0067ff,#0861ff,#165cff,#2656ff,#3951ff,#4d4bff,#6345ff,#7b40ff,#933aff,#ad34ff,#c92fff,#e529ff,#ff23fb,#ff1be0,#ff14c9,#ff0eb6,#ff0aa6,#ff0698,#ff038b,#ff0181,#f07,#ff006f,#ff0067,#ff0060,#ff005a,#ff0054,#ff004f,#ff004a,#ff0046,#ff0042,#ff003f,#ff003b,#ff0038,#ff0035)"></i><i style="margin-left:33.5px;width:478px;background:linear-gradient(90deg,#008dff,#08f,#0083ff,#007eff,#0078ff,#0073ff,#006dff,#0068ff,#0062ff,#0a5dff,#1957ff,#2a52ff,#3d4cff,#5247ff,#6841ff,#803bff,#9936ff,#b430ff,#d02bff,#ed25ff,#ff1ef3,#ff16da,#ff10c4,#ff0bb2,#ff07a2,#ff0494,#ff0188,#ff007e,#ff0074,#ff006c,#ff0065,#ff005e,#ff0058,#ff0053,#ff004e,#ff0049,#ff0045,#ff0041,#ff003d,#ff003a,#ff0037)"></i><i style="margin-left:34.5px;width:475px;background:linear-gradient(90deg,#0089ff,#0084ff,#007fff,#007aff,#0075ff,#006fff,#006aff,#0065ff,#005fff,#0a5aff,#1855ff,#294fff,#3c4aff,#5044ff,#663fff,#7d39ff,#9534ff,#af2eff,#ca29ff,#e623ff,#ff1efa,#ff16e0,#ff10ca,#ff0bb7,#ff07a7,#ff0399,#ff018c,#ff0082,#ff0078,#ff0070,#ff0068,#ff0061,#ff005b,#f05,#ff0050,#ff004b,#ff0047,#ff0043,#ff003f,#ff003c,#ff0039)"></i><i style="margin-left:35.5px;width:472px;background:linear-gradient(90deg,#0086ff,#0081ff,#007cff,#0076ff,#0071ff,#006cff,#0067ff,#0062ff,#005cff,#0957ff,#1752ff,#284cff,#3a47ff,#4e42ff,#633cff,#7937ff,#9132ff,#aa2cff,#c427ff,#e022ff,#fc1dff,#ff15e6,#ff0fd0,#ff0abc,#ff06ac,#ff039d,#ff0191,#ff0085,#ff007c,#ff0073,#ff006b,#ff0064,#ff005e,#ff0058,#ff0053,#ff004e,#ff0049,#ff0045,#ff0042,#ff003e,#ff003b)"></i><i style="margin-left:36.5px;width:469px;background:linear-gradient(90deg,#0082ff,#007dff,#0078ff,#0073ff,#006eff,#0069ff,#0064ff,#005fff,#0059ff,#0954ff,#174fff,#274aff,#3845ff,#4c3fff,#603aff,#7635ff,#8d30ff,#a62bff,#bf25ff,#da20ff,#f61bff,#ff15ed,#ff0fd5,#ff0ac2,#ff06b1,#ff03a2,#ff0195,#ff0089,#ff007f,#ff0076,#ff006e,#ff0067,#ff0061,#ff005b,#f05,#ff0050,#ff004c,#ff0048,#f04,#ff0040,#ff003d)"></i><i style="margin-left:37.5px;width:466px;background:linear-gradient(90deg,#007eff,#0079ff,#0074ff,#006fff,#006aff,#0065ff,#0060ff,#005bff,#0156ff,#0c50ff,#1a4bff,#2a46ff,#3c41ff,#503cff,#6536ff,#7b31ff,#932cff,#ac27ff,#c622ff,#e11dff,#fd18ff,#ff11e6,#ff0bd0,#ff07bc,#ff04ac,#ff019e,#ff0091,#ff0086,#ff007c,#ff0074,#ff006c,#ff0065,#ff005f,#ff0059,#ff0053,#ff004f,#ff004a,#ff0046,#ff0042,#ff003f)"></i><i style="margin-left:38.5px;width:463px;background:linear-gradient(90deg,#007bff,#0076ff,#0071ff,#006cff,#0067ff,#0062ff,#005dff,#0058ff,#0153ff,#0b4eff,#1949ff,#2944ff,#3b3fff,#4e39ff,#6234ff,#782fff,#8f2aff,#a725ff,#c020ff,#db1bff,#f616ff,#ff10ed,#ff0bd5,#ff07c2,#ff03b1,#ff01a2,#ff0095,#ff008a,#ff0080,#f07,#ff006f,#ff0068,#ff0061,#ff005c,#ff0056,#ff0051,#ff004d,#ff0048,#ff0045,#ff0041)"></i><i style="margin-left:38.5px;width:461px;background:linear-gradient(90deg,#0078ff,#0073ff,#006eff,#0069ff,#0064ff,#0060ff,#005bff,#0056ff,#0051ff,#0a4cff,#1847ff,#2742ff,#383dff,#4b38ff,#5f33ff,#742eff,#8a29ff,#a224ff,#ba1fff,#d41aff,#ef15ff,#ff10f4,#ff0bdc,#ff06c8,#ff03b6,#ff01a7,#ff009a,#ff008e,#ff0084,#ff007b,#ff0073,#ff006b,#ff0065,#ff005e,#ff0059,#ff0054,#ff004f,#ff004b,#ff0047,#ff0043)"></i><i style="margin-left:39.5px;width:458px;background:linear-gradient(90deg,#0075ff,#0070ff,#006bff,#06f,#0062ff,#005dff,#0058ff,#0053ff,#004eff,#0a49ff,#1744ff,#263fff,#373bff,#4936ff,#5c31ff,#712cff,#8727ff,#9d22ff,#b51eff,#ce19ff,#e814ff,#ff10fb,#ff0ae2,#ff06ce,#ff03bc,#ff01ac,#ff009f,#ff0093,#f08,#ff007f,#ff0076,#ff006e,#ff0068,#ff0061,#ff005c,#ff0056,#ff0051,#ff004d,#ff0049,#ff0045)"></i><i style="margin-left:40.5px;width:455px;background:linear-gradient(90deg,#0071ff,#006dff,#0068ff,#0063ff,#005eff,#0059ff,#0054ff,#0050ff,#024bff,#0c46ff,#1a41ff,#2a3cff,#3b37ff,#4d32ff,#612dff,#7628ff,#8c24ff,#a41fff,#bc1aff,#d516ff,#f011ff,#ff0cf3,#ff07dc,#ff04c8,#ff01b7,#ff00a8,#ff009a,#ff008f,#ff0085,#ff007b,#ff0073,#ff006c,#ff0065,#ff005f,#ff0059,#ff0054,#ff0050,#ff004b,#ff0047)"></i><i style="margin-left:41.5px;width:452px;background:linear-gradient(90deg,#006eff,#006aff,#0065ff,#0060ff,#005bff,#0057ff,#0052ff,#004dff,#0148ff,#0c44ff,#193fff,#283aff,#3935ff,#4b30ff,#5f2cff,#7327ff,#8922ff,#9f1eff,#b719ff,#d014ff,#e910ff,#ff0cfa,#ff07e2,#ff03cd,#ff01bc,#ff00ac,#ff009f,#ff0093,#f08,#ff007f,#f07,#ff006f,#ff0068,#ff0062,#ff005c,#ff0057,#ff0052,#ff004e,#ff004a)"></i><i style="margin-left:42.5px;width:449px;background:linear-gradient(90deg,#006bff,#0067ff,#0062ff,#005dff,#0059ff,#0054ff,#004fff,#004bff,#0146ff,#0c41ff,#193dff,#2738ff,#3833ff,#492fff,#5c2aff,#7025ff,#8521ff,#9b1cff,#b218ff,#ca13ff,#e30fff,#fd0bff,#ff07e8,#ff03d3,#ff01c1,#ff00b1,#ff00a3,#ff0097,#ff008c,#ff0083,#ff007a,#ff0072,#ff006b,#ff0065,#ff005f,#ff005a,#f05,#ff0050,#ff004c)"></i><i style="margin-left:43.5px;width:446px;background:linear-gradient(90deg,#0068ff,#0064ff,#005fff,#005bff,#0056ff,#0052ff,#004dff,#0048ff,#0144ff,#0b3fff,#183bff,#2636ff,#3631ff,#472dff,#5a28ff,#6d24ff,#821fff,#971bff,#ae17ff,#c512ff,#dd0eff,#f70aff,#ff06ee,#ff03d9,#ff00c6,#ff00b6,#ff00a8,#ff009b,#ff0090,#ff0086,#ff007e,#ff0076,#ff006e,#ff0068,#ff0062,#ff005c,#ff0057,#ff0053,#ff004e)"></i><i style="margin-left:44.5px;width:443px;background:linear-gradient(90deg,#0065ff,#0061ff,#005cff,#0058ff,#0053ff,#004fff,#004aff,#0045ff,#0341ff,#0e3cff,#1b37ff,#2a33ff,#3a2eff,#4c2aff,#5f25ff,#7221ff,#871cff,#9d18ff,#b414ff,#cc0fff,#e50bff,#ff08ff,#ff04e7,#ff01d2,#ff00c0,#ff00b1,#ff00a3,#ff0097,#ff008d,#ff0083,#ff007a,#ff0073,#ff006c,#ff0065,#ff005f,#ff005a,#f05,#ff0051)"></i><i style="margin-left:45.5px;width:441px;background:linear-gradient(90deg,#0063ff,#005eff,#005aff,#05f,#0051ff,#004cff,#0048ff,#0043ff,#033fff,#0e3aff,#1a36ff,#2931ff,#392dff,#4a28ff,#5d24ff,#701fff,#851bff,#9a17ff,#b012ff,#c80eff,#e00bff,#f907ff,#ff03ec,#ff01d7,#ff00c5,#ff00b5,#ff00a7,#ff009b,#ff0090,#ff0086,#ff007d,#ff0075,#ff006e,#ff0068,#ff0062,#ff005c,#ff0057,#ff0053)"></i><i style="margin-left:46.5px;width:438px;background:linear-gradient(90deg,#0060ff,#005bff,#0057ff,#0053ff,#004eff,#004aff,#0045ff,#0041ff,#033dff,#0d38ff,#1a34ff,#282fff,#382bff,#4927ff,#5a22ff,#6d1eff,#811aff,#9616ff,#ac12ff,#c30eff,#da0aff,#f306ff,#ff03f2,#f0d,#ff00ca,#ff00ba,#ff00ac,#ff009f,#ff0094,#ff008a,#ff0081,#ff0079,#ff0071,#ff006b,#ff0065,#ff005f,#ff005a,#f05)"></i><i style="margin-left:47.5px;width:435px;background:linear-gradient(90deg,#005dff,#0059ff,#05f,#0050ff,#004cff,#0048ff,#0043ff,#003fff,#033bff,#0d36ff,#1932ff,#272eff,#3629ff,#4725ff,#5821ff,#6b1dff,#7e19ff,#9215ff,#a811ff,#be0dff,#d509ff,#ed06ff,#ff03f9,#ff00e3,#ff00cf,#ff00bf,#ff00b0,#ff00a3,#ff0098,#ff008e,#ff0084,#ff007c,#ff0075,#ff006e,#ff0068,#ff0062,#ff005c,#ff0058)"></i><i style="margin-left:48.5px;width:432px;background:linear-gradient(90deg,#005bff,#0056ff,#0052ff,#004eff,#0049ff,#0045ff,#0041ff,#003cff,#0438ff,#0f33ff,#1c2fff,#2a2bff,#3a26ff,#4b22ff,#5d1eff,#701aff,#8416ff,#9812ff,#ae0eff,#c50aff,#dc07ff,#f503ff,#ff01f1,#ff00dc,#ff00c9,#ff00b9,#ff00ab,#ff009f,#ff0094,#ff008a,#ff0081,#ff0079,#ff0072,#ff006b,#ff0065,#ff005f,#ff005a)"></i><i style="margin-left:49.5px;width:429px;background:linear-gradient(90deg,#0058ff,#0054ff,#0050ff,#004bff,#0047ff,#0043ff,#003fff,#003aff,#0436ff,#0f32ff,#1b2dff,#2929ff,#3925ff,#4921ff,#5b1dff,#6d19ff,#8015ff,#9511ff,#aa0dff,#c009ff,#d706ff,#ee03ff,#ff00f7,#ff00e2,#ff00cf,#ff00be,#ff00b0,#ff00a3,#ff0098,#ff008e,#ff0085,#ff007c,#ff0075,#ff006e,#ff0068,#ff0062,#ff005d)"></i><i style="margin-left:50.5px;width:426px;background:linear-gradient(90deg,#0056ff,#0051ff,#004dff,#0049ff,#0045ff,#0041ff,#003dff,#0038ff,#0434ff,#0e30ff,#1b2cff,#2828ff,#3724ff,#4720ff,#581cff,#6a18ff,#7d14ff,#9110ff,#a60cff,#bb09ff,#d106ff,#e803ff,#ff00fe,#ff00e7,#ff00d4,#ff00c3,#ff00b5,#ff00a8,#ff009c,#ff0092,#f08,#ff0080,#ff0078,#ff0071,#ff006b,#ff0065,#ff005f)"></i><i style="margin-left:51.5px;width:423px;background:linear-gradient(90deg,#0053ff,#004fff,#004bff,#0047ff,#0043ff,#003fff,#003bff,#0037ff,#0433ff,#0e2eff,#1a2aff,#2726ff,#3622ff,#461eff,#561aff,#6817ff,#7a13ff,#8d0fff,#a10cff,#b608ff,#cc05ff,#e202ff,#fa00ff,#ff00ed,#ff00da,#ff00c8,#ff00b9,#ff00ac,#ff00a0,#ff0095,#ff008c,#ff0083,#ff007b,#ff0074,#ff006e,#ff0068,#ff0062)"></i><i style="margin-left:52.5px;width:420px;background:linear-gradient(90deg,#0051ff,#004dff,#0049ff,#0045ff,#0040ff,#003cff,#0038ff,#0034ff,#0630ff,#102cff,#1d28ff,#2b24ff,#3a20ff,#4a1cff,#5b18ff,#6d14ff,#8010ff,#930dff,#a809ff,#bd06ff,#d303ff,#ea00ff,#ff00fc,#ff00e6,#ff00d3,#ff00c2,#ff00b4,#ff00a7,#ff009c,#ff0091,#f08,#ff0080,#ff0078,#ff0071,#ff006b,#ff0065)"></i><i style="margin-left:54.5px;width:416px;background:linear-gradient(90deg,#004eff,#004aff,#0046ff,#0042ff,#003eff,#003aff,#0036ff,#0032ff,#062eff,#112aff,#1d26ff,#2a22ff,#391eff,#491aff,#5917ff,#6b13ff,#7d0fff,#900cff,#a408ff,#b905ff,#cf02ff,#e500ff,#fc00ff,#ff00eb,#ff00d8,#ff00c7,#ff00b8,#ff00ab,#ff00a0,#ff0095,#ff008c,#ff0083,#ff007b,#ff0074,#ff006e,#ff0068)"></i><i style="margin-left:55.5px;width:413px;background:linear-gradient(90deg,#004cff,#0048ff,#04f,#0040ff,#003cff,#0038ff,#0034ff,#0030ff,#062dff,#1029ff,#1c25ff,#2921ff,#381dff,#4719ff,#5716ff,#6812ff,#7a0eff,#8d0bff,#a008ff,#b505ff,#ca02ff,#e000ff,#f600ff,#ff00f1,#ff00de,#f0c,#ff00bd,#ff00b0,#ff00a4,#f09,#ff008f,#ff0087,#ff007f,#f07,#ff0071,#ff006b)"></i><i style="margin-left:56.5px;width:410px;background:linear-gradient(90deg,#004aff,#0046ff,#0042ff,#003eff,#003aff,#0037ff,#03f,#002fff,#062bff,#1027ff,#1b23ff,#2820ff,#361cff,#4518ff,#5515ff,#61f,#770eff,#8a0aff,#9d07ff,#b004ff,#c502ff,#da00ff,#f000ff,#ff00f8,#ff00e3,#ff00d2,#ff00c2,#ff00b4,#ff00a8,#ff009d,#ff0093,#ff008a,#ff0082,#ff007b,#ff0074,#ff006e)"></i><i style="margin-left:57.5px;width:407px;background:linear-gradient(90deg,#0048ff,#04f,#0040ff,#003cff,#0038ff,#0034ff,#0030ff,#002dff,#0829ff,#1225ff,#1e21ff,#2c1dff,#3a1aff,#4916ff,#5a12ff,#6b0fff,#7d0bff,#8f08ff,#a305ff,#b702ff,#c0f,#e200ff,#f800ff,#ff00f0,#ff00dc,#ff00cb,#ff00bc,#ff00af,#ff00a3,#f09,#ff008f,#ff0086,#ff007e,#f07,#ff0071)"></i><i style="margin-left:58.5px;width:404px;background:linear-gradient(90deg,#0046ff,#0042ff,#003eff,#003aff,#0036ff,#03f,#002fff,#002bff,#0727ff,#1224ff,#1d20ff,#2b1cff,#3919ff,#4815ff,#5711ff,#680eff,#7a0bff,#8c08ff,#9f05ff,#b302ff,#c700ff,#dc00ff,#f200ff,#ff00f6,#ff00e2,#ff00d0,#ff00c1,#ff00b4,#ff00a7,#ff009d,#ff0093,#ff008a,#ff0082,#ff007a,#ff0074)"></i><i style="margin-left:59.5px;width:401px;background:linear-gradient(90deg,#04f,#0040ff,#003cff,#0039ff,#0035ff,#0031ff,#002dff,#002aff,#0726ff,#12f,#1d1fff,#291bff,#3717ff,#4614ff,#51f,#660dff,#770aff,#8907ff,#9b04ff,#ae02ff,#c200ff,#d700ff,#ec00ff,#ff00fc,#ff00e8,#ff00d6,#ff00c6,#ff00b8,#ff00ac,#ff00a1,#ff0097,#ff008e,#ff0085,#ff007e,#f07)"></i><i style="margin-left:60.5px;width:398px;background:linear-gradient(90deg,#0042ff,#003eff,#003aff,#0037ff,#03f,#002fff,#002cff,#0028ff,#0725ff,#1121ff,#1c1dff,#281aff,#3617ff,#4413ff,#5310ff,#630dff,#7409ff,#8507ff,#9704ff,#aa01ff,#bd00ff,#d200ff,#e600ff,#fc00ff,#ff00ed,#ff00db,#ff00cb,#ff00bd,#ff00b0,#ff00a5,#ff009b,#ff0091,#ff0089,#ff0081,#ff007a)"></i><i style="margin-left:61.5px;width:395px;background:linear-gradient(90deg,#0040ff,#003cff,#0039ff,#0035ff,#0031ff,#002dff,#002aff,#0126ff,#0922ff,#131fff,#1f1bff,#2c18ff,#3a14ff,#4811ff,#580eff,#680aff,#7907ff,#8b05ff,#9e02ff,#b100ff,#c500ff,#d900ff,#ef00ff,#ff00fa,#ff00e6,#ff00d4,#ff00c5,#ff00b7,#ff00ab,#ff00a0,#ff0096,#ff008d,#ff0085,#ff007d)"></i><i style="margin-left:62.5px;width:392px;background:linear-gradient(90deg,#003eff,#003aff,#0037ff,#03f,#0030ff,#002cff,#0028ff,#0125ff,#0921ff,#131eff,#1e1aff,#2b17ff,#3813ff,#4710ff,#560dff,#660aff,#7607ff,#8804ff,#9a02ff,#ad00ff,#c000ff,#d400ff,#e900ff,#fe00ff,#ff00eb,#ff00da,#ff00ca,#ff00bc,#ff00af,#ff00a4,#ff009a,#ff0091,#f08,#ff0081)"></i><i style="margin-left:63.5px;width:389px;background:linear-gradient(90deg,#003cff,#0039ff,#0035ff,#0032ff,#002eff,#002aff,#0027ff,#0123ff,#0820ff,#121dff,#1d19ff,#2a16ff,#3713ff,#450fff,#540cff,#6309ff,#7306ff,#8404ff,#9601ff,#a800ff,#b0f,#cf00ff,#e300ff,#f800ff,#ff00f1,#ff00df,#ff00cf,#ff00c1,#ff00b4,#ff00a8,#ff009e,#ff0094,#ff008c,#ff0084)"></i><i style="margin-left:65.5px;width:386px;background:linear-gradient(90deg,#003aff,#0037ff,#03f,#0030ff,#002cff,#0029ff,#0025ff,#0122ff,#091fff,#131bff,#1e18ff,#2a15ff,#3711ff,#440eff,#530bff,#6208ff,#7206ff,#8303ff,#9401ff,#a600ff,#b800ff,#c0f,#df00ff,#f400ff,#ff00f6,#ff00e3,#ff00d3,#ff00c4,#ff00b7,#ff00ac,#ff00a1,#ff0098,#ff008f,#ff0087)"></i><i style="margin-left:66.5px;width:383px;background:linear-gradient(90deg,#0038ff,#0035ff,#0031ff,#002eff,#002aff,#0027ff,#0023ff,#0320ff,#0b1dff,#1519ff,#2016ff,#2d13ff,#3a0fff,#480cff,#5709ff,#6707ff,#7704ff,#8902ff,#9a00ff,#ad00ff,#c000ff,#d300ff,#e700ff,#fc00ff,#ff00ed,#ff00dc,#f0c,#ff00be,#ff00b1,#ff00a6,#ff009c,#ff0093,#ff008b)"></i><i style="margin-left:67.5px;width:380px;background:linear-gradient(90deg,#0037ff,#03f,#0030ff,#002cff,#0029ff,#0026ff,#02f,#021fff,#0b1cff,#1418ff,#2015ff,#2c12ff,#390fff,#470cff,#5509ff,#6506ff,#7503ff,#8501ff,#9700ff,#a800ff,#b0f,#ce00ff,#e200ff,#f600ff,#ff00f3,#ff00e1,#ff00d1,#ff00c3,#ff00b6,#f0a,#ff00a0,#ff0097,#ff008e)"></i><i style="margin-left:68.5px;width:377px;background:linear-gradient(90deg,#0035ff,#0032ff,#002eff,#002bff,#0028ff,#0024ff,#0021ff,#021eff,#0a1aff,#1417ff,#1f14ff,#2b11ff,#380eff,#450bff,#5308ff,#6206ff,#7203ff,#8201ff,#9300ff,#a400ff,#b700ff,#c900ff,#dc00ff,#f000ff,#ff00f9,#ff00e7,#ff00d6,#ff00c8,#f0b,#ff00af,#ff00a4,#ff009b,#ff0092)"></i><i style="margin-left:69.5px;width:374px;background:linear-gradient(90deg,#0034ff,#0030ff,#002dff,#002aff,#0026ff,#0023ff,#0020ff,#021dff,#0a19ff,#1316ff,#1e13ff,#2a10ff,#360dff,#430aff,#5108ff,#6005ff,#6f03ff,#7f01ff,#9000ff,#a100ff,#b200ff,#c400ff,#d700ff,#eb00ff,#fe00ff,#ff00ed,#ff00dc,#ff00cd,#ff00bf,#ff00b3,#ff00a8,#ff009f,#ff0096)"></i><i style="margin-left:70.5px;width:371px;background:linear-gradient(90deg,#0032ff,#002fff,#002bff,#0028ff,#0025ff,#0021ff,#001eff,#041bff,#0c18ff,#1614ff,#2111ff,#2d0eff,#3a0bff,#4709ff,#5606ff,#6503ff,#7401ff,#8500ff,#9600ff,#a700ff,#b900ff,#c0f,#df00ff,#f300ff,#ff00f7,#ff00e4,#ff00d4,#ff00c6,#ff00b9,#ff00ad,#ff00a3,#f09)"></i><i style="margin-left:72.5px;width:367px;background:linear-gradient(90deg,#0030ff,#002dff,#002aff,#0026ff,#0023ff,#0020ff,#001dff,#041aff,#0c16ff,#1613ff,#2110ff,#2d0dff,#390bff,#4608ff,#5405ff,#6303ff,#7201ff,#8200ff,#9300ff,#a400ff,#b500ff,#c800ff,#da00ff,#e0f,#ff00fc,#ff00ea,#ff00d9,#ff00cb,#ff00be,#ff00b2,#ff00a7,#ff009d)"></i><i style="margin-left:73.5px;width:364px;background:linear-gradient(90deg,#002fff,#002bff,#0028ff,#0025ff,#02f,#001fff,#001cff,#0419ff,#0c16ff,#1513ff,#2010ff,#2b0dff,#380aff,#4507ff,#5205ff,#6103ff,#7001ff,#7f00ff,#8f00ff,#a000ff,#b100ff,#c300ff,#d500ff,#e800ff,#fb00ff,#ff00f0,#ff00df,#ff00d0,#ff00c2,#ff00b6,#ff00ab,#ff00a1)"></i><i style="margin-left:74.5px;width:361px;background:linear-gradient(90deg,#002dff,#002aff,#0027ff,#0024ff,#0021ff,#001eff,#001bff,#0418ff,#0c15ff,#1512ff,#1f0fff,#2a0cff,#3609ff,#4307ff,#5104ff,#5f02ff,#6d00ff,#7c00ff,#8c00ff,#9c00ff,#ad00ff,#be00ff,#d000ff,#e300ff,#f500ff,#ff00f6,#ff00e4,#ff00d5,#ff00c7,#f0b,#ff00b0,#ff00a6)"></i><i style="margin-left:75.5px;width:358px;background:linear-gradient(90deg,#002cff,#0029ff,#0025ff,#02f,#001fff,#001cff,#0019ff,#0516ff,#0e13ff,#1710ff,#220dff,#2e0aff,#3a08ff,#4705ff,#5503ff,#6301ff,#7200ff,#8200ff,#9200ff,#a300ff,#b400ff,#c600ff,#d800ff,#eb00ff,#f0f,#ff00ed,#ff00dc,#ff00ce,#ff00c0,#ff00b5,#f0a)"></i><i style="margin-left:76.5px;width:355px;background:linear-gradient(90deg,#002aff,#0027ff,#0024ff,#0021ff,#001eff,#001bff,#0018ff,#0515ff,#0d12ff,#170fff,#210dff,#2d0aff,#3907ff,#4605ff,#5303ff,#6101ff,#7000ff,#7f00ff,#8f00ff,#9f00ff,#b000ff,#c100ff,#d300ff,#e600ff,#f900ff,#ff00f3,#ff00e2,#ff00d3,#ff00c5,#ff00b9,#ff00ae)"></i><i style="margin-left:77.5px;width:352px;background:linear-gradient(90deg,#0029ff,#0026ff,#0023ff,#0020ff,#001dff,#001aff,#0017ff,#0514ff,#0d11ff,#160fff,#200cff,#2c09ff,#3707ff,#4404ff,#5102ff,#5f00ff,#6d00ff,#7c00ff,#8b00ff,#9b00ff,#ac00ff,#bd00ff,#ce00ff,#e000ff,#f300ff,#ff00f9,#ff00e7,#ff00d8,#ff00ca,#ff00be,#ff00b3)"></i><i style="margin-left:79.5px;width:348px;background:linear-gradient(90deg,#0027ff,#0024ff,#0021ff,#001eff,#001bff,#0018ff,#0015ff,#0712ff,#0f10ff,#190dff,#240aff,#2f08ff,#3c05ff,#4903ff,#5601ff,#6400ff,#7300ff,#8200ff,#9200ff,#a300ff,#b300ff,#c500ff,#d700ff,#e900ff,#fc00ff,#ff00ef,#ff00df,#ff00d0,#ff00c3,#ff00b7)"></i><i style="margin-left:80.5px;width:345px;background:linear-gradient(90deg,#0026ff,#0023ff,#0020ff,#001dff,#001aff,#0017ff,#0014ff,#0712ff,#0f0fff,#190cff,#230aff,#2e07ff,#3a05ff,#4703ff,#5401ff,#6200ff,#7000ff,#7f00ff,#8f00ff,#9f00ff,#af00ff,#c000ff,#d200ff,#e400ff,#f600ff,#ff00f5,#ff00e4,#ff00d5,#ff00c8,#ff00bc)"></i><i style="margin-left:81.5px;width:342px;background:linear-gradient(90deg,#0025ff,#02f,#001fff,#001cff,#0019ff,#0016ff,#0014ff,#0711ff,#0f0eff,#180cff,#2209ff,#2d07ff,#3904ff,#4502ff,#5200ff,#6000ff,#6e00ff,#7c00ff,#8b00ff,#9b00ff,#ab00ff,#bc00ff,#cd00ff,#de00ff,#f000ff,#ff00fb,#ff00ea,#ff00db,#ff00cd,#ff00c0)"></i><i style="margin-left:82.5px;width:339px;background:linear-gradient(90deg,#0024ff,#0021ff,#001eff,#001bff,#0018ff,#0015ff,#0013ff,#0610ff,#0e0dff,#170bff,#2108ff,#2c06ff,#3804ff,#4402ff,#5000ff,#5d00ff,#6b00ff,#7900ff,#80f,#9700ff,#a700ff,#b700ff,#c800ff,#d900ff,#eb00ff,#fd00ff,#ff00f0,#ff00e0,#ff00d2,#ff00c5)"></i><i style="margin-left:83.5px;width:336px;background:linear-gradient(90deg,#02f,#0020ff,#001dff,#001aff,#0017ff,#0014ff,#0111ff,#080fff,#100cff,#1a09ff,#2407ff,#2f05ff,#3b03ff,#4801ff,#50f,#6200ff,#7000ff,#7f00ff,#8e00ff,#9e00ff,#ae00ff,#bf00ff,#d000ff,#e200ff,#f400ff,#ff00f8,#ff00e7,#ff00d8,#ff00ca)"></i><i style="margin-left:85.5px;width:333px;background:linear-gradient(90deg,#0021ff,#001eff,#001bff,#0018ff,#0016ff,#0013ff,#0210ff,#080eff,#110bff,#1a09ff,#2406ff,#2f04ff,#3b02ff,#4700ff,#5400ff,#6100ff,#6f00ff,#7d00ff,#8c00ff,#9c00ff,#ac00ff,#bc00ff,#cd00ff,#de00ff,#f000ff,#ff00fc,#ff00eb,#ff00dc,#ff00ce)"></i><i style="margin-left:86.5px;width:330px;background:linear-gradient(90deg,#0020ff,#001dff,#001aff,#0018ff,#0015ff,#0012ff,#0210ff,#080dff,#100bff,#1908ff,#2306ff,#2e04ff,#3902ff,#4500ff,#5200ff,#5f00ff,#6c00ff,#7a00ff,#8900ff,#9800ff,#a700ff,#b700ff,#c800ff,#d900ff,#ea00ff,#fc00ff,#ff00f1,#ff00e1,#ff00d3)"></i><i style="margin-left:87.5px;width:327px;background:linear-gradient(90deg,#001fff,#001cff,#0019ff,#0017ff,#0014ff,#01f,#010fff,#080cff,#100aff,#1908ff,#2305ff,#2d03ff,#3801ff,#40f,#5000ff,#5d00ff,#6a00ff,#7800ff,#8600ff,#9400ff,#a400ff,#b300ff,#c300ff,#d300ff,#e400ff,#f600ff,#ff00f7,#ff00e7,#ff00d9)"></i><i style="margin-left:88.5px;width:324px;background:linear-gradient(90deg,#001eff,#001bff,#0018ff,#0015ff,#0013ff,#0010ff,#030eff,#0a0bff,#1209ff,#1b06ff,#2504ff,#3002ff,#3c01ff,#4800ff,#50f,#6200ff,#6f00ff,#7d00ff,#8c00ff,#9b00ff,#ab00ff,#b0f,#cb00ff,#dc00ff,#e0f,#ff00fe,#ff00ed,#ff00de)"></i><i style="margin-left:90.5px;width:320px;background:linear-gradient(90deg,#001cff,#001aff,#0017ff,#0014ff,#0012ff,#000fff,#030dff,#0a0aff,#1208ff,#1b06ff,#2504ff,#3002ff,#3b00ff,#4700ff,#5300ff,#6000ff,#6d00ff,#7b00ff,#8900ff,#9800ff,#a700ff,#b700ff,#c700ff,#d700ff,#e800ff,#fa00ff,#ff00f3,#ff00e4)"></i><i style="margin-left:91.5px;width:317px;background:linear-gradient(90deg,#001bff,#0019ff,#0016ff,#0013ff,#01f,#000eff,#030cff,#0a0aff,#1207ff,#1b05ff,#2403ff,#2f01ff,#3a00ff,#4500ff,#5100ff,#5e00ff,#6b00ff,#7800ff,#8600ff,#9400ff,#a300ff,#b200ff,#c200ff,#d200ff,#e300ff,#f400ff,#ff00f9,#ff00e9)"></i><i style="margin-left:92.5px;width:314px;background:linear-gradient(90deg,#001aff,#0018ff,#0015ff,#0013ff,#0010ff,#000eff,#030bff,#0909ff,#1107ff,#1a05ff,#2303ff,#2e01ff,#3800ff,#4300ff,#4f00ff,#5b00ff,#6800ff,#7500ff,#8300ff,#9100ff,#9f00ff,#ae00ff,#bd00ff,#cd00ff,#d0f,#e0f,#f0f,#ff00ef)"></i><i style="margin-left:93.5px;width:311px;background:linear-gradient(90deg,#0019ff,#0017ff,#0014ff,#01f,#000fff,#000dff,#040aff,#0b08ff,#1306ff,#1c04ff,#2602ff,#3100ff,#3c00ff,#4800ff,#5400ff,#6000ff,#6e00ff,#7b00ff,#8900ff,#9800ff,#a700ff,#b600ff,#c600ff,#d600ff,#e700ff,#f800ff,#ff00f5)"></i><i style="margin-left:95.5px;width:307px;background:linear-gradient(90deg,#0018ff,#0015ff,#0013ff,#0010ff,#000eff,#000cff,#0409ff,#0b07ff,#1305ff,#1c03ff,#2601ff,#3000ff,#3b00ff,#4600ff,#5200ff,#5f00ff,#6b00ff,#7900ff,#8600ff,#9400ff,#a300ff,#b200ff,#c100ff,#d100ff,#e100ff,#f200ff,#ff00fb)"></i><i style="margin-left:96.5px;width:304px;background:linear-gradient(90deg,#0017ff,#0015ff,#0012ff,#0010ff,#000dff,#000bff,#0409ff,#0b07ff,#1305ff,#1c03ff,#2501ff,#2f00ff,#3a00ff,#4500ff,#5000ff,#5c00ff,#6900ff,#7600ff,#8300ff,#9100ff,#9f00ff,#ae00ff,#bd00ff,#c0f,#dc00ff,#ec00ff,#fd00ff)"></i><i style="margin-left:97.5px;width:301px;background:linear-gradient(90deg,#0016ff,#0014ff,#01f,#000fff,#000dff,#000aff,#0408ff,#0b06ff,#1204ff,#1b02ff,#2401ff,#2e00ff,#3800ff,#4300ff,#4e00ff,#5a00ff,#60f,#7300ff,#8000ff,#8e00ff,#9b00ff,#a0f,#b800ff,#c700ff,#d700ff,#e600ff,#f600ff)"></i><i style="margin-left:98.5px;width:298px;background:linear-gradient(90deg,#0015ff,#0013ff,#0010ff,#000eff,#000cff,#0009ff,#0507ff,#0c05ff,#1403ff,#1d02ff,#2700ff,#3100ff,#3c00ff,#4700ff,#5300ff,#5f00ff,#6c00ff,#7900ff,#8600ff,#9400ff,#a300ff,#b100ff,#c100ff,#d000ff,#e000ff,#f000ff)"></i><i style="margin-left:100.5px;width:294px;background:linear-gradient(90deg,#0014ff,#0012ff,#000fff,#000dff,#000bff,#0009ff,#0607ff,#0d05ff,#1403ff,#1d01ff,#2700ff,#3100ff,#3b00ff,#4600ff,#5100ff,#5d00ff,#6a00ff,#7600ff,#8400ff,#9100ff,#9f00ff,#ad00ff,#bc00ff,#cb00ff,#db00ff,#eb00ff)"></i><i style="margin-left:101.5px;width:291px;background:linear-gradient(90deg,#0013ff,#01f,#000fff,#000cff,#000aff,#0008ff,#0506ff,#0c04ff,#1402ff,#1c01ff,#2600ff,#2f00ff,#3a00ff,#40f,#5000ff,#5b00ff,#6700ff,#7400ff,#8000ff,#8e00ff,#9b00ff,#a900ff,#b800ff,#c600ff,#d500ff,#e500ff)"></i><i style="margin-left:102.5px;width:288px;background:linear-gradient(90deg,#0012ff,#0010ff,#000eff,#000bff,#0009ff,#0107ff,#0705ff,#0e03ff,#1602ff,#1f00ff,#2900ff,#30f,#3d00ff,#4900ff,#5400ff,#6000ff,#6d00ff,#7a00ff,#8700ff,#9500ff,#a300ff,#b100ff,#c000ff,#d000ff,#df00ff)"></i><i style="margin-left:104.5px;width:284px;background:linear-gradient(90deg,#01f,#000fff,#000dff,#000bff,#0008ff,#0106ff,#0705ff,#0e03ff,#1601ff,#1f00ff,#2800ff,#3200ff,#3c00ff,#4700ff,#5300ff,#5e00ff,#6b00ff,#70f,#8400ff,#9100ff,#9f00ff,#ad00ff,#bc00ff,#cb00ff,#da00ff)"></i><i style="margin-left:105.5px;width:281px;background:linear-gradient(90deg,#01f,#000eff,#000cff,#000aff,#0008ff,#0106ff,#0704ff,#0e02ff,#1601ff,#1e00ff,#2700ff,#3100ff,#3b00ff,#4600ff,#5100ff,#5c00ff,#6800ff,#7400ff,#8100ff,#8e00ff,#9b00ff,#a900ff,#b700ff,#c600ff,#d400ff)"></i><i style="margin-left:106.5px;width:278px;background:linear-gradient(90deg,#0010ff,#000eff,#000bff,#0009ff,#0007ff,#0105ff,#0704ff,#0d02ff,#1501ff,#1d00ff,#2600ff,#3000ff,#3a00ff,#40f,#4f00ff,#5a00ff,#6500ff,#7100ff,#7e00ff,#8a00ff,#9700ff,#a500ff,#b300ff,#c100ff,#cf00ff)"></i><i style="margin-left:108.5px;width:275px;background:linear-gradient(90deg,#000fff,#000dff,#000aff,#0008ff,#0006ff,#0304ff,#0903ff,#1001ff,#1800ff,#2100ff,#2a00ff,#3400ff,#3e00ff,#4900ff,#5400ff,#6000ff,#6c00ff,#7900ff,#8500ff,#9300ff,#a000ff,#ae00ff,#bd00ff,#cb00ff)"></i><i style="margin-left:109.5px;width:272px;background:linear-gradient(90deg,#000eff,#000cff,#000aff,#0008ff,#0006ff,#0204ff,#0802ff,#1001ff,#1700ff,#2000ff,#2900ff,#30f,#3d00ff,#4700ff,#5200ff,#5e00ff,#6a00ff,#7600ff,#8200ff,#8f00ff,#9c00ff,#a0f,#b800ff,#c600ff)"></i><i style="margin-left:110.5px;width:269px;background:linear-gradient(90deg,#000dff,#000bff,#0009ff,#0007ff,#0005ff,#0204ff,#0802ff,#0f01ff,#1700ff,#1f00ff,#2800ff,#3200ff,#3b00ff,#4600ff,#5000ff,#5c00ff,#6700ff,#7300ff,#7f00ff,#8c00ff,#90f,#a600ff,#b300ff,#c100ff)"></i><i style="margin-left:112.5px;width:265px;background:linear-gradient(90deg,#000cff,#000aff,#0008ff,#0007ff,#0005ff,#0303ff,#0802ff,#0f00ff,#1700ff,#1f00ff,#2800ff,#3100ff,#3a00ff,#40f,#4f00ff,#5a00ff,#6500ff,#7000ff,#7c00ff,#80f,#9500ff,#a200ff,#af00ff,#bd00ff)"></i><i style="margin-left:113.5px;width:262px;background:linear-gradient(90deg,#000cff,#000aff,#0008ff,#0006ff,#0004ff,#0402ff,#0a01ff,#10f,#1900ff,#20f,#2b00ff,#3400ff,#3e00ff,#4900ff,#5400ff,#5f00ff,#6b00ff,#70f,#8300ff,#9000ff,#9d00ff,#a0f,#b800ff)"></i><i style="margin-left:114.5px;width:259px;background:linear-gradient(90deg,#000bff,#0009ff,#0007ff,#0005ff,#0004ff,#0402ff,#0a01ff,#10f,#1800ff,#2100ff,#2a00ff,#30f,#3d00ff,#4700ff,#5200ff,#5d00ff,#6800ff,#7400ff,#8000ff,#8c00ff,#90f,#a600ff,#b300ff)"></i><i style="margin-left:116.5px;width:255px;background:linear-gradient(90deg,#000aff,#0008ff,#0006ff,#0005ff,#0003ff,#0402ff,#0a00ff,#10f,#1800ff,#2000ff,#2900ff,#3200ff,#3c00ff,#4600ff,#5000ff,#5b00ff,#60f,#7100ff,#7d00ff,#8900ff,#9500ff,#a200ff,#af00ff)"></i><i style="margin-left:117.5px;width:252px;background:linear-gradient(90deg,#000aff,#0008ff,#0006ff,#0004ff,#0002ff,#0501ff,#0b00ff,#1300ff,#1b00ff,#2300ff,#2c00ff,#3600ff,#4000ff,#4a00ff,#50f,#6000ff,#6c00ff,#70f,#8400ff,#9000ff,#9d00ff,#a0f)"></i><i style="margin-left:119.5px;width:248px;background:linear-gradient(90deg,#0009ff,#0007ff,#0005ff,#0003ff,#0002ff,#0501ff,#0c00ff,#1300ff,#1a00ff,#2300ff,#2c00ff,#3500ff,#3f00ff,#4900ff,#5300ff,#5e00ff,#6900ff,#7500ff,#8100ff,#8d00ff,#90f,#a600ff)"></i><i style="margin-left:120.5px;width:245px;background:linear-gradient(90deg,#0008ff,#0006ff,#0005ff,#0003ff,#0002ff,#0500ff,#0b00ff,#1200ff,#1a00ff,#20f,#2a00ff,#3400ff,#3d00ff,#4700ff,#5100ff,#5c00ff,#6700ff,#7200ff,#7d00ff,#8900ff,#9500ff,#a200ff)"></i><i style="margin-left:121.5px;width:242px;background:linear-gradient(90deg,#0008ff,#0006ff,#0004ff,#0003ff,#0001ff,#0500ff,#0b00ff,#1200ff,#1900ff,#2100ff,#2900ff,#3200ff,#3b00ff,#4500ff,#4f00ff,#5900ff,#6400ff,#6f00ff,#7a00ff,#8600ff,#9200ff,#9e00ff)"></i><i style="margin-left:123.5px;width:238px;background:linear-gradient(90deg,#0007ff,#0005ff,#0003ff,#0002ff,#0101ff,#0700ff,#0d00ff,#1400ff,#1c00ff,#2400ff,#2d00ff,#3600ff,#4000ff,#4a00ff,#5400ff,#5f00ff,#6a00ff,#7600ff,#8100ff,#8d00ff,#9a00ff)"></i><i style="margin-left:124.5px;width:235px;background:linear-gradient(90deg,#0006ff,#0005ff,#0003ff,#0002ff,#0100ff,#0600ff,#0d00ff,#1400ff,#1b00ff,#2300ff,#2c00ff,#3500ff,#3e00ff,#4800ff,#5200ff,#5d00ff,#6700ff,#7300ff,#7e00ff,#8a00ff,#9600ff)"></i><i style="margin-left:126.5px;width:231px;background:linear-gradient(90deg,#0006ff,#0004ff,#0003ff,#0001ff,#0200ff,#0700ff,#0d00ff,#1400ff,#1b00ff,#2300ff,#2b00ff,#3400ff,#3d00ff,#4700ff,#5000ff,#5b00ff,#6500ff,#7000ff,#7b00ff,#8600ff,#9200ff)"></i><i style="margin-left:127.5px;width:228px;background:linear-gradient(90deg,#0005ff,#0003ff,#0002ff,#0001ff,#0200ff,#0800ff,#0e00ff,#1600ff,#1d00ff,#2600ff,#2f00ff,#3800ff,#4100ff,#4b00ff,#5600ff,#6000ff,#6b00ff,#70f,#8200ff,#8e00ff)"></i><i style="margin-left:129.5px;width:224px;background:linear-gradient(90deg,#0004ff,#0003ff,#0002ff,#00f,#0300ff,#0800ff,#0e00ff,#1600ff,#1d00ff,#2500ff,#2e00ff,#3700ff,#4000ff,#4a00ff,#5400ff,#5e00ff,#6900ff,#7400ff,#7f00ff,#8b00ff)"></i><i style="margin-left:130.5px;width:221px;background:linear-gradient(90deg,#0004ff,#0003ff,#0001ff,#00f,#0300ff,#0800ff,#0e00ff,#1500ff,#1c00ff,#2400ff,#2d00ff,#3500ff,#3e00ff,#4800ff,#5200ff,#5c00ff,#60f,#7100ff,#7c00ff,#8700ff)"></i><i style="margin-left:132.5px;width:217px;background:linear-gradient(90deg,#0003ff,#0002ff,#0001ff,#00f,#0300ff,#0800ff,#0e00ff,#1500ff,#1c00ff,#2400ff,#2c00ff,#3400ff,#3d00ff,#4600ff,#5000ff,#5900ff,#6300ff,#6e00ff,#7800ff,#8300ff)"></i><i style="margin-left:133.5px;width:215px;background:linear-gradient(90deg,#0003ff,#0002ff,#00f,#00f,#0400ff,#0a00ff,#1000ff,#1700ff,#1f00ff,#2700ff,#3000ff,#3900ff,#4200ff,#4c00ff,#5600ff,#6000ff,#6b00ff,#7600ff,#8100ff)"></i><i style="margin-left:135.5px;width:211px;background:linear-gradient(90deg,#0002ff,#0001ff,#00f,#00f,#0400ff,#0a00ff,#1000ff,#1700ff,#1f00ff,#2600ff,#2f00ff,#3700ff,#4000ff,#4a00ff,#5400ff,#5e00ff,#6800ff,#7300ff,#7d00ff)"></i><i style="margin-left:136.5px;width:208px;background:linear-gradient(90deg,#0002ff,#0001ff,#00f,#00f,#0400ff,#0a00ff,#1000ff,#1600ff,#1e00ff,#2500ff,#2e00ff,#3600ff,#3f00ff,#4800ff,#5100ff,#5b00ff,#6500ff,#6f00ff,#7a00ff)"></i><i style="margin-left:138.5px;width:204px;background:linear-gradient(90deg,#0002ff,#00f,#00f,#0100ff,#0600ff,#0b00ff,#1200ff,#1900ff,#2100ff,#2900ff,#3100ff,#3a00ff,#40f,#4d00ff,#5700ff,#6100ff,#6c00ff,#70f)"></i><i style="margin-left:140.5px;width:200px;background:linear-gradient(90deg,#0001ff,#00f,#00f,#0100ff,#0600ff,#0b00ff,#1200ff,#1900ff,#2000ff,#2800ff,#3000ff,#3900ff,#4200ff,#4b00ff,#50f,#5f00ff,#6900ff,#7400ff)"></i><i style="margin-left:141.5px;width:197px;background:linear-gradient(90deg,#0001ff,#00f,#00f,#0100ff,#0600ff,#0b00ff,#10f,#1800ff,#1f00ff,#2700ff,#2f00ff,#3800ff,#4000ff,#4900ff,#5300ff,#5c00ff,#60f,#7000ff)"></i><i style="margin-left:143.5px;width:193px;background:linear-gradient(90deg,#00f,#00f,#00f,#0100ff,#0600ff,#0b00ff,#10f,#1800ff,#1f00ff,#2600ff,#2e00ff,#3600ff,#3f00ff,#4800ff,#5100ff,#5a00ff,#6400ff,#6d00ff)"></i><i style="margin-left:144.5px;width:190px;background:linear-gradient(90deg,#00f,#00f,#00f,#0200ff,#0700ff,#0d00ff,#1300ff,#1a00ff,#20f,#2a00ff,#3200ff,#3b00ff,#40f,#4d00ff,#5600ff,#6000ff,#6a00ff)"></i><i style="margin-left:146.5px;width:186px;background:linear-gradient(90deg,#00f,#00f,#00f,#0200ff,#0700ff,#0d00ff,#1300ff,#1a00ff,#2100ff,#2900ff,#3100ff,#3900ff,#4200ff,#4b00ff,#5400ff,#5e00ff,#6700ff)"></i><i style="margin-left:148.5px;width:182px;background:linear-gradient(90deg,#00f,#00f,#00f,#0300ff,#0700ff,#0d00ff,#1300ff,#1a00ff,#2100ff,#2800ff,#3000ff,#3800ff,#4000ff,#4900ff,#5200ff,#5b00ff,#6400ff)"></i><i style="margin-left:149.5px;width:179px;background:linear-gradient(90deg,#00f,#00f,#00f,#0300ff,#0900ff,#0f00ff,#1500ff,#1c00ff,#2400ff,#2b00ff,#3400ff,#3c00ff,#4500ff,#4e00ff,#5800ff,#6200ff)"></i><i style="margin-left:151.5px;width:175px;background:linear-gradient(90deg,#00f,#00f,#00f,#0400ff,#0900ff,#0f00ff,#1500ff,#1c00ff,#2300ff,#2b00ff,#30f,#3b00ff,#4300ff,#4c00ff,#50f,#5f00ff)"></i><i style="margin-left:153.5px;width:171px;background:linear-gradient(90deg,#00f,#00f,#00f,#0400ff,#0900ff,#0f00ff,#1500ff,#1b00ff,#20f,#2a00ff,#3100ff,#3900ff,#4200ff,#4a00ff,#5300ff,#5c00ff)"></i><i style="margin-left:154.5px;width:168px;background:linear-gradient(90deg,#00f,#00f,#0100ff,#0500ff,#0a00ff,#1000ff,#1700ff,#1e00ff,#2500ff,#2d00ff,#3500ff,#3e00ff,#4700ff,#5000ff,#5900ff)"></i><i style="margin-left:156.5px;width:164px;background:linear-gradient(90deg,#00f,#00f,#0100ff,#0500ff,#0a00ff,#1000ff,#1700ff,#1d00ff,#2500ff,#2c00ff,#3400ff,#3c00ff,#4500ff,#4e00ff,#5700ff)"></i><i style="margin-left:158.5px;width:160px;background:linear-gradient(90deg,#00f,#00f,#0100ff,#0500ff,#0a00ff,#1000ff,#1600ff,#1d00ff,#2400ff,#2b00ff,#30f,#3b00ff,#4300ff,#4b00ff,#5400ff)"></i><i style="margin-left:160.5px;width:156px;background:linear-gradient(90deg,#00f,#00f,#0200ff,#0700ff,#0c00ff,#1200ff,#1900ff,#2000ff,#2700ff,#2f00ff,#3700ff,#4000ff,#4900ff,#5200ff)"></i><i style="margin-left:162.5px;width:153px;background:linear-gradient(90deg,#00f,#00f,#0200ff,#0700ff,#0c00ff,#1200ff,#1900ff,#2000ff,#2700ff,#2f00ff,#3600ff,#3f00ff,#4700ff,#5000ff)"></i><i style="margin-left:164.5px;width:149px;background:linear-gradient(90deg,#00f,#00f,#0300ff,#0700ff,#0c00ff,#1200ff,#1800ff,#1f00ff,#2600ff,#2d00ff,#3500ff,#3d00ff,#4500ff,#4d00ff)"></i><i style="margin-left:165.5px;width:146px;background:linear-gradient(90deg,#00f,#00f,#0300ff,#0700ff,#0c00ff,#1200ff,#1800ff,#1e00ff,#2500ff,#2c00ff,#30f,#3b00ff,#4300ff,#4b00ff)"></i><i style="margin-left:167.5px;width:142px;background:linear-gradient(90deg,#00f,#00f,#0400ff,#0800ff,#0e00ff,#1400ff,#1b00ff,#2100ff,#2900ff,#3000ff,#3800ff,#4000ff,#4900ff)"></i><i style="margin-left:169.5px;width:138px;background:linear-gradient(90deg,#00f,#00f,#0400ff,#0900ff,#0e00ff,#1400ff,#1a00ff,#2100ff,#2800ff,#2f00ff,#3700ff,#3e00ff,#4600ff)"></i><i style="margin-left:171.5px;width:134px;background:linear-gradient(90deg,#00f,#0100ff,#0400ff,#0900ff,#0e00ff,#1400ff,#1a00ff,#2000ff,#2700ff,#2e00ff,#3500ff,#3c00ff,#40f)"></i><i style="margin-left:173.5px;width:130px;background:linear-gradient(90deg,#00f,#0100ff,#0500ff,#0a00ff,#1000ff,#1600ff,#1c00ff,#2300ff,#2b00ff,#3200ff,#3a00ff,#4200ff)"></i><i style="margin-left:176.5px;width:125px;background:linear-gradient(90deg,#00f,#0200ff,#0600ff,#0b00ff,#1000ff,#1600ff,#1c00ff,#2300ff,#2a00ff,#3100ff,#3800ff,#4000ff)"></i><i style="margin-left:178.5px;width:121px;background:linear-gradient(90deg,#00f,#0200ff,#0600ff,#0b00ff,#1000ff,#1600ff,#1c00ff,#20f,#2800ff,#2f00ff,#3600ff,#3e00ff)"></i><i style="margin-left:180.5px;width:117px;background:linear-gradient(90deg,#00f,#0300ff,#0700ff,#0c00ff,#1200ff,#1800ff,#1f00ff,#2500ff,#2d00ff,#3400ff,#3c00ff)"></i><i style="margin-left:182.5px;width:113px;background:linear-gradient(90deg,#00f,#0300ff,#0700ff,#0c00ff,#1200ff,#1800ff,#1e00ff,#2400ff,#2b00ff,#3200ff,#3a00ff)"></i><i style="margin-left:184.5px;width:109px;background:linear-gradient(90deg,#00f,#0400ff,#0800ff,#0d00ff,#1200ff,#1700ff,#1d00ff,#2300ff,#2a00ff,#3100ff,#3800ff)"></i><i style="margin-left:186.5px;width:105px;background:linear-gradient(90deg,#0100ff,#0400ff,#0900ff,#0e00ff,#1400ff,#1a00ff,#2000ff,#2700ff,#2e00ff,#3600ff)"></i><i style="margin-left:189.5px;width:100px;background:linear-gradient(90deg,#0100ff,#0500ff,#0a00ff,#0f00ff,#1400ff,#1a00ff,#2000ff,#2600ff,#2d00ff,#3400ff)"></i><i style="margin-left:191.5px;width:96px;background:linear-gradient(90deg,#0200ff,#0600ff,#0b00ff,#1000ff,#1600ff,#1d00ff,#2300ff,#2a00ff,#3200ff)"></i><i style="margin-left:193.5px;width:92px;background:linear-gradient(90deg,#0200ff,#0600ff,#0b00ff,#1000ff,#1600ff,#1c00ff,#20f,#2900ff,#3000ff)"></i><i style="margin-left:196.5px;width:87px;background:linear-gradient(90deg,#0300ff,#0700ff,#0c00ff,#10f,#1600ff,#1b00ff,#2100ff,#2800ff,#2e00ff)"></i><i style="margin-left:198.5px;width:83px;background:linear-gradient(90deg,#0300ff,#0800ff,#0d00ff,#1300ff,#1800ff,#1f00ff,#2500ff,#2c00ff)"></i><i style="margin-left:201.5px;width:79px;background:linear-gradient(90deg,#0400ff,#0900ff,#0e00ff,#1300ff,#1800ff,#1e00ff,#2500ff,#2b00ff)"></i><i style="margin-left:203.5px;width:75px;background:linear-gradient(90deg,#0500ff,#0900ff,#0e00ff,#1300ff,#1800ff,#1d00ff,#2300ff,#2900ff)"></i><i style="margin-left:205.5px;width:71px;background:linear-gradient(90deg,#0500ff,#0a00ff,#0f00ff,#1500ff,#1b00ff,#2100ff,#2800ff)"></i><i style="margin-left:208.5px;width:66px;background:linear-gradient(90deg,#0600ff,#0b00ff,#1000ff,#1500ff,#1a00ff,#2000ff,#2600ff)"></i><i style="margin-left:210.5px;width:62px;background:linear-gradient(90deg,#0700ff,#0b00ff,#0f00ff,#1400ff,#1900ff,#1f00ff,#2400ff)"></i><i style="margin-left:213.5px;width:57px;background:linear-gradient(90deg,#0800ff,#0c00ff,#1200ff,#1700ff,#1d00ff,#2300ff)"></i><i style="margin-left:215.5px;width:53px;background:linear-gradient(90deg,#0800ff,#0d00ff,#10f,#1600ff,#1c00ff,#2100ff)"></i><i style="margin-left:218.5px;width:48px;background:linear-gradient(90deg,#0900ff,#0e00ff,#1400ff,#1a00ff,#2000ff)"></i><i style="margin-left:220.5px;width:44px;background:linear-gradient(90deg,#0a00ff,#0e00ff,#1300ff,#1900ff,#1e00ff)"></i><i style="margin-left:222.5px;width:40px;background:linear-gradient(90deg,#0a00ff,#0f00ff,#1300ff,#1800ff,#1d00ff)"></i><i style="margin-left:225.5px;width:35px;background:linear-gradient(90deg,#0b00ff,#1000ff,#1600ff,#1b00ff)"></i><i style="margin-left:227.5px;width:31px;background:linear-gradient(90deg,#0c00ff,#1000ff,#1500ff,#1a00ff)"></i><i style="margin-left:229.5px;width:27px;background:linear-gradient(90deg,#0c00ff,#1000ff,#1400ff,#1900ff)"></i><i style="margin-left:232.5px;width:22px;background:linear-gradient(90deg,#0d00ff,#1200ff,#1700ff)"></i><i style="margin-left:234.5px;width:18px;background:linear-gradient(90deg,#0e00ff,#1200ff,#1600ff)"></i><i style="margin-left:237.5px;width:13px;background:linear-gradient(90deg,#0f00ff,#1200ff,#1500ff)"></i><i></i></b></div></div>
<svg width="1563" height="795" viewBox="0 0 1563 795"><defs><clipPath id="plotclip"><rect x="945.5" y="39.5" width="577.0" height="444.0"/></clipPath><clipPath id="loc"><path d="M1192.1,470.8 L1192.0,470.8 L1191.9,470.8 L1191.9,470.8 L1191.8,470.9 L1191.6,470.9 L1191.5,470.9 L1191.3,470.9 L1191.2,471.0 L1191.1,471.1 L1191.0,471.2 L1190.9,471.3 L1190.7,471.3 L1190.4,471.3 L1190.1,471.2 L1189.8,471.2 L1189.5,471.2 L1189.2,471.2 L1188.8,471.1 L1188.3,470.9 L1187.6,470.5 L1186.7,470.0 L1185.7,469.3 L1184.6,468.5 L1183.2,467.5 L1181.7,466.3 L1180.0,464.9 L1178.0,463.3 L1175.9,461.5 L1173.5,459.5 L1170.9,457.2 L1168.0,454.8 L1164.8,452.2 L1161.2,449.2 L1157.3,446.0 L1153.0,442.4 L1148.3,438.5 L1143.3,434.4 L1137.9,429.7 L1132.0,424.5 L1125.7,418.6 L1119.0,412.1 L1111.7,404.6 L1103.5,395.5 L1094.1,384.4 L1083.8,371.4 L1072.9,356.9 L1061.5,340.7 L1049.6,322.7 L1037.3,303.3 L1025.0,282.9 L1012.8,261.8 L1001.1,240.4 L990.3,219.1 L980.8,198.5 L972.5,178.8 L965.3,160.3 L959.4,143.5 L954.7,128.5 L951.2,115.4 L948.8,103.8 L947.4,93.9 L946.8,85.4 L947.1,78.1 L948.2,71.7 L949.9,66.3 L952.4,61.8 L955.5,58.1 L959.2,55.3 L963.2,53.2 L967.7,51.7 L972.4,50.7 L977.5,50.1 L982.7,49.7 L988.1,49.5 L993.6,49.4 L999.0,49.4 L1004.5,49.5 L1010.0,49.7 L1015.7,49.9 L1021.6,50.2 L1027.6,50.6 L1033.8,51.1 L1040.2,51.6 L1046.8,52.2 L1053.7,52.8 L1060.8,53.6 L1068.3,54.3 L1076.0,55.1 L1084.1,56.0 L1092.5,56.9 L1101.2,57.9 L1110.3,58.9 L1119.8,60.0 L1129.7,61.1 L1140.0,62.2 L1150.6,63.5 L1161.7,64.7 L1173.2,66.1 L1185.1,67.4 L1197.3,68.8 L1210.0,70.3 L1223.0,71.8 L1236.3,73.3 L1249.9,74.9 L1263.7,76.5 L1277.8,78.1 L1291.9,79.7 L1305.8,81.3 L1319.4,82.9 L1332.9,84.4 L1346.3,86.0 L1359.5,87.5 L1372.2,89.0 L1384.3,90.3 L1395.9,91.7 L1406.9,92.9 L1417.3,94.1 L1427.2,95.3 L1436.3,96.3 L1444.9,97.3 L1452.9,98.2 L1460.3,99.1 L1467.2,99.9 L1473.7,100.6 L1479.7,101.3 L1485.5,102.0 L1490.9,102.6 L1496.0,103.2 L1500.8,103.7 L1505.2,104.2 L1509.3,104.7 L1513.0,105.1 L1516.4,105.5 L1519.3,105.9 L1522.0,106.2 L1524.4,106.4 L1526.6,106.7 L1528.6,106.9 L1530.3,107.1 L1531.9,107.3 L1533.1,107.5 L1534.2,107.6 L1535.2,107.7 L1536.1,107.8 L1537.0,107.9 L1537.8,108.0 L1538.5,108.1 L1539.2,108.2 L1539.9,108.2 L1540.6,108.3 L1541.3,108.4 L1542.0,108.5 L1542.5,108.5 L1542.9,108.6 L1543.2,108.6 L1543.4,108.6 L1543.6,108.7 L1543.8,108.7 L1543.9,108.7 L1543.9,108.7 L1543.9,108.7Z"/></clipPath><clipPath id="ins"><rect x="1325.5" y="346.5" width="191.5" height="129.0"/></clipPath><linearGradient id="insg" gradientUnits="userSpaceOnUse" x1="1325" y1="370" x2="1500.8" y2="497.8"><stop offset="0" stop-color="#9cff00"/><stop offset=".48" stop-color="#ffff00"/><stop offset="1" stop-color="#ffa400"/></linearGradient></defs>
<g clip-path="url(#plotclip)"><path clip-path="url(#loc)" fill-rule="evenodd" d="M945.5,39.5H1522.5V483.5H945.5ZM1422.0,94.1 L1040.2,55.6 L1113.9,365.8Z" fill="#000" fill-opacity=".38"/></g>
<path d="M945.5,39.5H1522.5V483.5" stroke="#9a9a9a" fill="none"/>
<path d="M945.5,39.5V483.5H1522.5M945.5,483.5v5M993.5,483.5v5M1041.5,483.5v5M1089.5,483.5v5M1137.5,483.5v5M1185.5,483.5v5M1233.5,483.5v5M1281.5,483.5v5M1329.5,483.5v5M1377.5,483.5v5M1425.5,483.5v5M1473.5,483.5v5M940.5,483.5h5M940.5,446.6h5M940.5,409.6h5M940.5,372.6h5M940.5,335.7h5M940.5,298.8h5M940.5,261.8h5M940.5,224.8h5M940.5,187.9h5M940.5,150.9h5M940.5,114.0h5M940.5,77.0h5" stroke="#b4b4b4" stroke-width="1.15" fill="none"/>
<text x="941.999" y="502.9" font-size="13.07" fill="#e6e6e6" textLength="7.00243" lengthAdjust="spacingAndGlyphs">0</text>
<text x="932.998" y="488.7" font-size="13.07" fill="#e6e6e6" textLength="7.00243" lengthAdjust="spacingAndGlyphs">0</text>
<text x="981.247" y="502.9" font-size="13.07" fill="#e6e6e6" textLength="24.5056" lengthAdjust="spacingAndGlyphs">0,05</text>
<text x="915.494" y="451.75" font-size="13.07" fill="#e6e6e6" textLength="24.5056" lengthAdjust="spacingAndGlyphs">0,05</text>
<text x="1032.75" y="502.9" font-size="13.07" fill="#e6e6e6" textLength="17.5031" lengthAdjust="spacingAndGlyphs">0,1</text>
<text x="922.497" y="414.8" font-size="13.07" fill="#e6e6e6" textLength="17.5031" lengthAdjust="spacingAndGlyphs">0,1</text>
<text x="1077.25" y="502.9" font-size="13.07" fill="#e6e6e6" textLength="24.5056" lengthAdjust="spacingAndGlyphs">0,15</text>
<text x="915.494" y="377.85" font-size="13.07" fill="#e6e6e6" textLength="24.5056" lengthAdjust="spacingAndGlyphs">0,15</text>
<text x="1128.75" y="502.9" font-size="13.07" fill="#e6e6e6" textLength="17.5031" lengthAdjust="spacingAndGlyphs">0,2</text>
<text x="922.497" y="340.9" font-size="13.07" fill="#e6e6e6" textLength="17.5031" lengthAdjust="spacingAndGlyphs">0,2</text>
<text x="1173.25" y="502.9" font-size="13.07" fill="#e6e6e6" textLength="24.5056" lengthAdjust="spacingAndGlyphs">0,25</text>
<text x="915.494" y="303.95" font-size="13.07" fill="#e6e6e6" textLength="24.5056" lengthAdjust="spacingAndGlyphs">0,25</text>
<text x="1224.75" y="502.9" font-size="13.07" fill="#e6e6e6" textLength="17.5031" lengthAdjust="spacingAndGlyphs">0,3</text>
<text x="922.497" y="267" font-size="13.07" fill="#e6e6e6" textLength="17.5031" lengthAdjust="spacingAndGlyphs">0,3</text>
<text x="1269.25" y="502.9" font-size="13.07" fill="#e6e6e6" textLength="24.5056" lengthAdjust="spacingAndGlyphs">0,35</text>
<text x="915.494" y="230.05" font-size="13.07" fill="#e6e6e6" textLength="24.5056" lengthAdjust="spacingAndGlyphs">0,35</text>
<text x="1320.75" y="502.9" font-size="13.07" fill="#e6e6e6" textLength="17.5031" lengthAdjust="spacingAndGlyphs">0,4</text>
<text x="922.497" y="193.1" font-size="13.07" fill="#e6e6e6" textLength="17.5031" lengthAdjust="spacingAndGlyphs">0,4</text>
<text x="1365.25" y="502.9" font-size="13.07" fill="#e6e6e6" textLength="24.5056" lengthAdjust="spacingAndGlyphs">0,45</text>
<text x="915.494" y="156.15" font-size="13.07" fill="#e6e6e6" textLength="24.5056" lengthAdjust="spacingAndGlyphs">0,45</text>
<text x="1416.75" y="502.9" font-size="13.07" fill="#e6e6e6" textLength="17.5031" lengthAdjust="spacingAndGlyphs">0,5</text>
<text x="922.497" y="119.2" font-size="13.07" fill="#e6e6e6" textLength="17.5031" lengthAdjust="spacingAndGlyphs">0,5</text>
<text x="1461.25" y="502.9" font-size="13.07" fill="#e6e6e6" textLength="24.5056" lengthAdjust="spacingAndGlyphs">0,55</text>
<text x="915.494" y="82.25" font-size="13.07" fill="#e6e6e6" textLength="24.5056" lengthAdjust="spacingAndGlyphs">0,55</text>
<rect x="1325.5" y="346.5" width="191.5" height="129" fill="#242424"/>
<g clip-path="url(#ins)"><path d="M1325.5,346.5H1402.8L1517,423.7V475.5H1325.5z" fill="url(#insg)"/><path d="M1325.5,346.5H1402.8L1517,423.7V467.5L1325.5,354z" fill="#000" fill-opacity=".38"/></g>
<rect x="1325.5" y="346.5" width="191.5" height="129" fill="none" stroke="#a0a0a0" stroke-width="1.3"/>
<rect x="1414.5" y="404.5" width="12" height="12" fill="none" stroke="#fff" stroke-width="1.2"/>
<circle cx="1362.6" cy="464.6" r="4" fill="#c0b818" stroke="#000" stroke-width="1"/>
<rect x="1179" y="122.7" width="12.5" height="12.5" fill="none" stroke="#fff" stroke-width="1.25" stroke-opacity=".9"/>
<rect x="1232.3" y="115.1" width="12.5" height="12.5" fill="none" stroke="#fff" stroke-width="1.25" stroke-opacity=".9"/>
<rect x="1292.3" y="105.9" width="12.5" height="12.5" fill="none" stroke="#fff" stroke-width="1.25" stroke-opacity=".9"/>
<rect x="1351.6" y="97" width="12.5" height="12.5" fill="none" stroke="#fff" stroke-width="1.25" stroke-opacity=".9"/>
<rect x="1415.7" y="87.5" width="12.5" height="12.5" fill="none" stroke="#fff" stroke-width="1.25" stroke-opacity=".9"/>
<rect x="1100.8" y="105.7" width="12.5" height="12.5" fill="none" stroke="#fff" stroke-width="1.25" stroke-opacity=".9"/>
<rect x="1078.6" y="86.9" width="12.5" height="12.5" fill="none" stroke="#fff" stroke-width="1.25" stroke-opacity=".9"/>
<rect x="1060.7" y="71.8" width="12.5" height="12.5" fill="none" stroke="#fff" stroke-width="1.25" stroke-opacity=".9"/>
<rect x="1046.1" y="59.4" width="12.5" height="12.5" fill="none" stroke="#fff" stroke-width="1.25" stroke-opacity=".9"/>
<rect x="1033.9" y="49" width="12.5" height="12.5" fill="none" stroke="#fff" stroke-width="1.25" stroke-opacity=".9"/>
<rect x="1126.6" y="157.1" width="12.5" height="12.5" fill="none" stroke="#fff" stroke-width="1.25" stroke-opacity=".9"/>
<rect x="1123.5" y="190.6" width="12.5" height="12.5" fill="none" stroke="#fff" stroke-width="1.25" stroke-opacity=".9"/>
<rect x="1119.5" y="232.6" width="12.5" height="12.5" fill="none" stroke="#fff" stroke-width="1.25" stroke-opacity=".9"/>
<rect x="1114" y="288.1" width="12.5" height="12.5" fill="none" stroke="#fff" stroke-width="1.25" stroke-opacity=".9"/>
<rect x="1107.7" y="359.2" width="12.5" height="12.5" fill="none" stroke="#fff" stroke-width="1.25" stroke-opacity=".9"/>
<rect x="1114" y="132.1" width="12.5" height="12.5" fill="none" stroke="#fff" stroke-width="1.25" stroke-opacity=".9"/>
<rect x="1099.1" y="134.3" width="12.5" height="12.5" fill="none" stroke="#fff" stroke-width="1.25" stroke-opacity=".9"/>
<rect x="1084.4" y="136.4" width="12.5" height="12.5" fill="none" stroke="#fff" stroke-width="1.25" stroke-opacity=".9"/>
<rect x="1069.9" y="138.6" width="12.5" height="12.5" fill="none" stroke="#fff" stroke-width="1.25" stroke-opacity=".9"/>
<rect x="1055.7" y="140.7" width="12.5" height="12.5" fill="none" stroke="#fff" stroke-width="1.25" stroke-opacity=".9"/>
<rect x="1146.3" y="144.3" width="12.5" height="12.5" fill="none" stroke="#fff" stroke-width="1.25" stroke-opacity=".9"/>
<rect x="1166.1" y="161.2" width="12.5" height="12.5" fill="none" stroke="#fff" stroke-width="1.25" stroke-opacity=".9"/>
<rect x="1189.5" y="181" width="12.5" height="12.5" fill="none" stroke="#fff" stroke-width="1.25" stroke-opacity=".9"/>
<rect x="1217.2" y="204.5" width="12.5" height="12.5" fill="none" stroke="#fff" stroke-width="1.25" stroke-opacity=".9"/>
<rect x="1250.8" y="233" width="12.5" height="12.5" fill="none" stroke="#fff" stroke-width="1.25" stroke-opacity=".9"/>
<rect x="1130.8" y="112" width="12.5" height="12.5" fill="none" stroke="#fff" stroke-width="1.25" stroke-opacity=".9"/>
<rect x="1132.3" y="96.4" width="12.5" height="12.5" fill="none" stroke="#fff" stroke-width="1.25" stroke-opacity=".9"/>
<rect x="1133.6" y="82.6" width="12.5" height="12.5" fill="none" stroke="#fff" stroke-width="1.25" stroke-opacity=".9"/>
<rect x="1134.7" y="70.3" width="12.5" height="12.5" fill="none" stroke="#fff" stroke-width="1.25" stroke-opacity=".9"/>
<rect x="1135.8" y="59.3" width="12.5" height="12.5" fill="none" stroke="#fff" stroke-width="1.25" stroke-opacity=".9"/>
<circle cx="1111.5" cy="110.5" r="3.9" fill="#96be96" stroke="#000" stroke-width="1.1"/>
<circle cx="1092.9" cy="94.5" r="3.9" fill="#78b46e" stroke="#000" stroke-width="1.1"/>
<circle cx="1079.5" cy="82.4" r="3.9" fill="#64af64" stroke="#000" stroke-width="1.1"/>
<circle cx="1068.5" cy="72.4" r="3.9" fill="#50aa50" stroke="#000" stroke-width="1.1"/>
<circle cx="1059.9" cy="64.9" r="3.5" fill="#1e961e" stroke="#000" stroke-width="1.1"/>
<circle cx="1135.2" cy="115.5" r="3.9" fill="#bebe8c" stroke="#000" stroke-width="1.1"/>
<circle cx="1136.1" cy="104.4" r="3.9" fill="#bebe78" stroke="#000" stroke-width="1.1"/>
<circle cx="1137.4" cy="91.9" r="3.9" fill="#c3be64" stroke="#000" stroke-width="1.1"/>
<circle cx="1138.6" cy="81" r="3.9" fill="#c3be46" stroke="#000" stroke-width="1.1"/>
<circle cx="1139.6" cy="72.4" r="3.5" fill="#c8be1e" stroke="#000" stroke-width="1.1"/>
<circle cx="1121.4" cy="135.1" r="3.9" fill="#a0b9af" stroke="#000" stroke-width="1.1"/>
<circle cx="1109.1" cy="136.3" r="3.9" fill="#8cb9b4" stroke="#000" stroke-width="1.1"/>
<circle cx="1096.4" cy="137.3" r="3.9" fill="#78b9b9" stroke="#000" stroke-width="1.1"/>
<circle cx="1084.3" cy="139.9" r="3.9" fill="#5ab4be" stroke="#000" stroke-width="1.1"/>
<circle cx="1072.4" cy="139.9" r="3.5" fill="#28aabe" stroke="#000" stroke-width="1.1"/>
<circle cx="1175.5" cy="126.5" r="3.9" fill="#b996a0" stroke="#000" stroke-width="1.1"/>
<circle cx="1223.2" cy="118.9" r="3.9" fill="#be6e78" stroke="#000" stroke-width="1.1"/>
<circle cx="1278.3" cy="112.8" r="3.9" fill="#c35a5a" stroke="#000" stroke-width="1.1"/>
<circle cx="1333.3" cy="105.3" r="3.9" fill="#c34646" stroke="#000" stroke-width="1.1"/>
<circle cx="1390.8" cy="98.3" r="3.5" fill="#c31414" stroke="#000" stroke-width="1.1"/>
<circle cx="1148.5" cy="145.9" r="3.9" fill="#b4a0b9" stroke="#000" stroke-width="1.1"/>
<circle cx="1164.5" cy="161.9" r="3.9" fill="#b48cb9" stroke="#000" stroke-width="1.1"/>
<circle cx="1187.5" cy="182.9" r="3.9" fill="#b478b9" stroke="#000" stroke-width="1.1"/>
<circle cx="1214.6" cy="207.5" r="3.9" fill="#b45ab9" stroke="#000" stroke-width="1.1"/>
<circle cx="1247.3" cy="240.3" r="3.5" fill="#b41ebe" stroke="#000" stroke-width="1.1"/>
<circle cx="1132.5" cy="157" r="3.9" fill="#9696c3" stroke="#000" stroke-width="1.1"/>
<circle cx="1130.3" cy="187.9" r="3.9" fill="#8282be" stroke="#000" stroke-width="1.1"/>
<circle cx="1126.5" cy="230.9" r="3.9" fill="#6e6ebe" stroke="#000" stroke-width="1.1"/>
<circle cx="1120" cy="288.6" r="3.9" fill="#5050b4" stroke="#000" stroke-width="1.1"/>
<circle cx="1112.5" cy="374.6" r="3.5" fill="#1400a0" stroke="#000" stroke-width="1.1"/>
<rect x="1129" y="130.5" width="12" height="12" fill="none" stroke="#000" stroke-width="1.7"/>
<circle cx="1132.7" cy="136.5" r="4" fill="#fff"/>
<circle cx="1138.5" cy="153.5" r="4.3" fill="#000"/>
</svg>
</body></html>
